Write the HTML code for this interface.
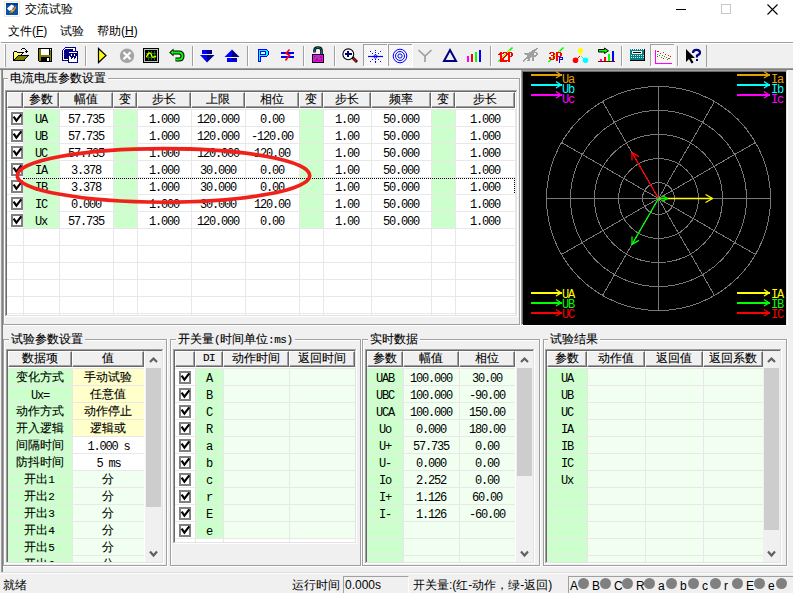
<!DOCTYPE html><html><head><meta charset="utf-8"><title>交流试验</title><style>
*{box-sizing:border-box}
html,body{margin:0;padding:0}
body{width:793px;height:593px;overflow:hidden;position:relative;background:#f0f0f0;font-family:"Liberation Sans",sans-serif;font-size:12px;color:#000}
div{position:absolute}
.ui{font-family:"Liberation Sans",sans-serif;font-size:12px;line-height:14px;white-space:nowrap}
.m{font-family:"Liberation Mono",monospace;font-size:12px;letter-spacing:-1.2px;line-height:16px;text-indent:-1px;white-space:nowrap;text-align:center}
.hc{-webkit-text-stroke:0.1px #000;background:#f0f0f0;border-top:1px solid #fff;border-left:1px solid #fff;border-right:1px solid #696969;border-bottom:1px solid #696969;box-shadow:inset -1px -1px 0 #a0a0a0;text-align:center;font-size:12px;line-height:13px;white-space:nowrap}
.cb{width:12px;height:13px;border:2px solid #808080;background:#fff}
.gl{padding:0 2px;background:#f0f0f0;line-height:14px;-webkit-text-stroke:0.1px #000}
.ms{font-family:"Liberation Mono",monospace;font-size:11px;letter-spacing:-0.5px}
.lg{font-family:"Liberation Mono",monospace;font-size:12px;line-height:11px;letter-spacing:-1.3px}
.t{text-align:center;line-height:17px;-webkit-text-stroke:0.1px #000}
.d{font-family:"Liberation Mono",monospace;font-size:11px}
svg{position:absolute;overflow:visible}
</style></head><body>
<div style="left:0px;top:0px;width:793px;height:42px;background:#fff"></div>
<div style="left:1px;top:42px;width:792px;height:1px;background:#a0a0a0"></div>
<svg style="left:0;top:0" width="24" height="20"><rect x="4.5" y="1.5" width="15" height="15" fill="none" stroke="#ece8e4" stroke-width="1"/><rect x="6" y="3" width="12" height="12" fill="#0a52a8"/><rect x="6" y="3" width="12" height="2" fill="#003c8c"/><path d="M7 8.5 L11.5 4.5 L13.5 5.5 L14 6.5 L12 9.5 L9.5 11 Z" fill="#ffffff"/><path d="M11 8.5 L13.5 6.5 L14 7.5 Z" fill="#a8d0f0"/><path d="M9 13 L12 10 L13 9.5 L15.5 6 L16 7.5 L14.5 10.5 L12.5 12.5 Z" fill="#ff7f10"/><path d="M11 10.5 L13 9.5 L13.5 10.5 L11.5 11.5 Z" fill="#ffd030"/></svg>
<div class="ui" style="left:25px;top:2px;">交流试验</div>
<div style="left:676px;top:9px;width:10px;height:1px;background:#000"></div>
<div style="left:721px;top:4px;width:10px;height:10px;border:1px solid #c8c8c8"></div>
<svg style="left:767px;top:4px" width="11" height="11" viewBox="0 0 11 11"><path d="M0.5 0.5 L10.5 10.5 M10.5 0.5 L0.5 10.5" stroke="#000" stroke-width="1.1"/></svg>
<div class="ui" style="left:8px;top:24px">文件(<u>F</u>)</div>
<div class="ui" style="left:60px;top:24px">试验</div>
<div class="ui" style="left:97px;top:24px">帮助(<u>H</u>)</div>
<div style="left:0px;top:43px;width:793px;height:1px;background:#fff"></div>
<div style="left:0px;top:44px;width:793px;height:24px;background:#f0f0f0"></div>
<div style="left:4px;top:44px;width:1px;height:23px;background:#fff"></div>
<div style="left:5px;top:44px;width:1px;height:23px;background:#a0a0a0"></div>
<div style="left:85px;top:46px;width:1px;height:20px;background:#a0a0a0"></div>
<div style="left:86px;top:46px;width:1px;height:20px;background:#fff"></div>
<div style="left:192px;top:46px;width:1px;height:20px;background:#a0a0a0"></div>
<div style="left:193px;top:46px;width:1px;height:20px;background:#fff"></div>
<div style="left:247px;top:46px;width:1px;height:20px;background:#a0a0a0"></div>
<div style="left:248px;top:46px;width:1px;height:20px;background:#fff"></div>
<div style="left:303px;top:46px;width:1px;height:20px;background:#a0a0a0"></div>
<div style="left:304px;top:46px;width:1px;height:20px;background:#fff"></div>
<div style="left:334px;top:46px;width:1px;height:20px;background:#a0a0a0"></div>
<div style="left:335px;top:46px;width:1px;height:20px;background:#fff"></div>
<div style="left:490px;top:46px;width:1px;height:20px;background:#a0a0a0"></div>
<div style="left:491px;top:46px;width:1px;height:20px;background:#fff"></div>
<div style="left:621px;top:46px;width:1px;height:20px;background:#a0a0a0"></div>
<div style="left:622px;top:46px;width:1px;height:20px;background:#fff"></div>
<div style="left:677px;top:46px;width:1px;height:20px;background:#a0a0a0"></div>
<div style="left:678px;top:46px;width:1px;height:20px;background:#fff"></div>
<div style="left:706px;top:45px;width:1px;height:22px;background:#a0a0a0"></div>
<svg style="left:0;top:0" width="793" height="70"><defs><pattern id="chk" width="2" height="2" patternUnits="userSpaceOnUse"><rect width="2" height="2" fill="#f0f0f0"/><rect width="1" height="1" fill="#fff"/><rect x="1" y="1" width="1" height="1" fill="#fff"/></pattern></defs><rect x="22" y="48" width="3" height="1" fill="#000"/><rect x="21" y="49" width="1" height="1" fill="#000"/><rect x="25" y="49" width="1" height="1" fill="#000"/><rect x="26" y="50" width="1" height="1" fill="#000"/><rect x="14" y="51" width="3" height="1" fill="#000"/><rect x="25" y="51" width="3" height="1" fill="#000"/><rect x="13" y="52" width="1" height="1" fill="#000"/><rect x="14" y="52" width="1" height="1" fill="#ffff00"/><rect x="15" y="52" width="1" height="1" fill="#ffffff"/><rect x="16" y="52" width="1" height="1" fill="#ffff00"/><rect x="17" y="52" width="7" height="1" fill="#000"/><rect x="26" y="52" width="1" height="1" fill="#000"/><rect x="13" y="53" width="1" height="1" fill="#000"/><rect x="14" y="53" width="1" height="1" fill="#ffffff"/><rect x="15" y="53" width="1" height="1" fill="#ffff00"/><rect x="16" y="53" width="1" height="1" fill="#ffffff"/><rect x="17" y="53" width="1" height="1" fill="#ffff00"/><rect x="18" y="53" width="1" height="1" fill="#ffffff"/><rect x="19" y="53" width="1" height="1" fill="#ffff00"/><rect x="20" y="53" width="1" height="1" fill="#ffffff"/><rect x="21" y="53" width="1" height="1" fill="#ffff00"/><rect x="22" y="53" width="1" height="1" fill="#000"/><rect x="13" y="54" width="1" height="1" fill="#000"/><rect x="14" y="54" width="1" height="1" fill="#ffff00"/><rect x="15" y="54" width="1" height="1" fill="#ffffff"/><rect x="16" y="54" width="1" height="1" fill="#ffff00"/><rect x="17" y="54" width="1" height="1" fill="#ffffff"/><rect x="18" y="54" width="1" height="1" fill="#ffff00"/><rect x="19" y="54" width="1" height="1" fill="#ffffff"/><rect x="20" y="54" width="1" height="1" fill="#ffff00"/><rect x="21" y="54" width="1" height="1" fill="#000"/><rect x="13" y="55" width="1" height="1" fill="#000"/><rect x="14" y="55" width="1" height="1" fill="#ffffff"/><rect x="15" y="55" width="1" height="1" fill="#ffff00"/><rect x="16" y="55" width="1" height="1" fill="#ffffff"/><rect x="17" y="55" width="1" height="1" fill="#ffff00"/><rect x="18" y="55" width="11" height="1" fill="#000"/><rect x="13" y="56" width="1" height="1" fill="#000"/><rect x="14" y="56" width="1" height="1" fill="#ffff00"/><rect x="15" y="56" width="1" height="1" fill="#ffffff"/><rect x="16" y="56" width="1" height="1" fill="#ffff00"/><rect x="17" y="56" width="1" height="1" fill="#000"/><rect x="18" y="56" width="9" height="1" fill="#808000"/><rect x="27" y="56" width="1" height="1" fill="#000"/><rect x="13" y="57" width="1" height="1" fill="#000"/><rect x="14" y="57" width="1" height="1" fill="#ffffff"/><rect x="15" y="57" width="1" height="1" fill="#ffff00"/><rect x="16" y="57" width="1" height="1" fill="#000"/><rect x="17" y="57" width="9" height="1" fill="#808000"/><rect x="26" y="57" width="1" height="1" fill="#000"/><rect x="13" y="58" width="1" height="1" fill="#000"/><rect x="14" y="58" width="1" height="1" fill="#ffff00"/><rect x="15" y="58" width="1" height="1" fill="#000"/><rect x="16" y="58" width="9" height="1" fill="#808000"/><rect x="25" y="58" width="1" height="1" fill="#000"/><rect x="13" y="59" width="2" height="1" fill="#000"/><rect x="15" y="59" width="9" height="1" fill="#808000"/><rect x="24" y="59" width="1" height="1" fill="#000"/><rect x="13" y="60" width="12" height="1" fill="#000"/><rect x="38" y="48" width="14" height="1" fill="#000"/><rect x="38" y="49" width="1" height="1" fill="#000"/><rect x="39" y="49" width="2" height="1" fill="#808000"/><rect x="41" y="49" width="8" height="1" fill="#ffffff"/><rect x="49" y="49" width="1" height="1" fill="#000"/><rect x="50" y="49" width="1" height="1" fill="#ffffff"/><rect x="51" y="49" width="1" height="1" fill="#000"/><rect x="38" y="50" width="1" height="1" fill="#000"/><rect x="39" y="50" width="2" height="1" fill="#808000"/><rect x="41" y="50" width="8" height="1" fill="#ffffff"/><rect x="49" y="50" width="1" height="1" fill="#000"/><rect x="50" y="50" width="1" height="1" fill="#808000"/><rect x="51" y="50" width="1" height="1" fill="#000"/><rect x="38" y="51" width="1" height="1" fill="#000"/><rect x="39" y="51" width="2" height="1" fill="#808000"/><rect x="41" y="51" width="8" height="1" fill="#ffffff"/><rect x="49" y="51" width="1" height="1" fill="#000"/><rect x="50" y="51" width="1" height="1" fill="#808000"/><rect x="51" y="51" width="1" height="1" fill="#000"/><rect x="38" y="52" width="1" height="1" fill="#000"/><rect x="39" y="52" width="2" height="1" fill="#808000"/><rect x="41" y="52" width="8" height="1" fill="#ffffff"/><rect x="49" y="52" width="1" height="1" fill="#000"/><rect x="50" y="52" width="1" height="1" fill="#808000"/><rect x="51" y="52" width="1" height="1" fill="#000"/><rect x="38" y="53" width="1" height="1" fill="#000"/><rect x="39" y="53" width="2" height="1" fill="#808000"/><rect x="41" y="53" width="8" height="1" fill="#ffffff"/><rect x="49" y="53" width="1" height="1" fill="#000"/><rect x="50" y="53" width="1" height="1" fill="#808000"/><rect x="51" y="53" width="1" height="1" fill="#000"/><rect x="38" y="54" width="1" height="1" fill="#000"/><rect x="39" y="54" width="2" height="1" fill="#808000"/><rect x="41" y="54" width="8" height="1" fill="#ffffff"/><rect x="49" y="54" width="1" height="1" fill="#000"/><rect x="50" y="54" width="1" height="1" fill="#808000"/><rect x="51" y="54" width="1" height="1" fill="#000"/><rect x="38" y="55" width="1" height="1" fill="#000"/><rect x="39" y="55" width="12" height="1" fill="#808000"/><rect x="51" y="55" width="1" height="1" fill="#000"/><rect x="38" y="56" width="1" height="1" fill="#000"/><rect x="39" y="56" width="12" height="1" fill="#808000"/><rect x="51" y="56" width="1" height="1" fill="#000"/><rect x="38" y="57" width="1" height="1" fill="#000"/><rect x="39" y="57" width="2" height="1" fill="#808000"/><rect x="41" y="57" width="9" height="1" fill="#000"/><rect x="50" y="57" width="1" height="1" fill="#808000"/><rect x="51" y="57" width="1" height="1" fill="#000"/><rect x="38" y="58" width="1" height="1" fill="#000"/><rect x="39" y="58" width="2" height="1" fill="#808000"/><rect x="41" y="58" width="6" height="1" fill="#000"/><rect x="47" y="58" width="2" height="1" fill="#ffffff"/><rect x="49" y="58" width="1" height="1" fill="#000"/><rect x="50" y="58" width="1" height="1" fill="#808000"/><rect x="51" y="58" width="1" height="1" fill="#000"/><rect x="38" y="59" width="1" height="1" fill="#000"/><rect x="39" y="59" width="2" height="1" fill="#808000"/><rect x="41" y="59" width="6" height="1" fill="#000"/><rect x="47" y="59" width="2" height="1" fill="#ffffff"/><rect x="49" y="59" width="1" height="1" fill="#000"/><rect x="50" y="59" width="1" height="1" fill="#808000"/><rect x="51" y="59" width="1" height="1" fill="#000"/><rect x="38" y="60" width="1" height="1" fill="#000"/><rect x="39" y="60" width="2" height="1" fill="#808000"/><rect x="41" y="60" width="6" height="1" fill="#000"/><rect x="47" y="60" width="2" height="1" fill="#ffffff"/><rect x="49" y="60" width="1" height="1" fill="#000"/><rect x="50" y="60" width="1" height="1" fill="#808000"/><rect x="51" y="60" width="1" height="1" fill="#000"/><rect x="39" y="61" width="13" height="1" fill="#000"/><rect x="65" y="47" width="1" height="1" fill="#0000ff"/><rect x="66" y="47" width="1" height="1" fill="#000000"/><rect x="67" y="47" width="1" height="1" fill="#0000ff"/><rect x="68" y="47" width="1" height="1" fill="#000000"/><rect x="69" y="47" width="1" height="1" fill="#0000ff"/><rect x="70" y="47" width="1" height="1" fill="#000000"/><rect x="71" y="47" width="1" height="1" fill="#0000ff"/><rect x="72" y="47" width="1" height="1" fill="#000000"/><rect x="73" y="47" width="1" height="1" fill="#0000ff"/><rect x="74" y="47" width="1" height="1" fill="#000000"/><rect x="75" y="47" width="1" height="1" fill="#0000ff"/><rect x="64" y="48" width="1" height="1" fill="#0000ff"/><rect x="65" y="48" width="10" height="1" fill="#ffffff"/><rect x="75" y="48" width="1" height="1" fill="#000000"/><rect x="63" y="49" width="1" height="1" fill="#0000ff"/><rect x="64" y="49" width="1" height="1" fill="#ffffff"/><rect x="65" y="49" width="1" height="1" fill="#0000ff"/><rect x="66" y="49" width="1" height="1" fill="#000000"/><rect x="67" y="49" width="1" height="1" fill="#0000ff"/><rect x="68" y="49" width="1" height="1" fill="#000000"/><rect x="69" y="49" width="1" height="1" fill="#0000ff"/><rect x="70" y="49" width="1" height="1" fill="#000000"/><rect x="71" y="49" width="1" height="1" fill="#0000ff"/><rect x="72" y="49" width="1" height="1" fill="#000000"/><rect x="73" y="49" width="2" height="1" fill="#ffffff"/><rect x="75" y="49" width="1" height="1" fill="#0000ff"/><rect x="62" y="50" width="1" height="1" fill="#0000ff"/><rect x="63" y="50" width="1" height="1" fill="#ffffff"/><rect x="64" y="50" width="1" height="1" fill="#0000ff"/><rect x="65" y="50" width="1" height="1" fill="#000000"/><rect x="66" y="50" width="1" height="1" fill="#0000ff"/><rect x="67" y="50" width="1" height="1" fill="#000000"/><rect x="68" y="50" width="1" height="1" fill="#0000ff"/><rect x="69" y="50" width="1" height="1" fill="#000000"/><rect x="70" y="50" width="1" height="1" fill="#0000ff"/><rect x="71" y="50" width="1" height="1" fill="#000000"/><rect x="72" y="50" width="1" height="1" fill="#0000ff"/><rect x="73" y="50" width="2" height="1" fill="#ffffff"/><rect x="75" y="50" width="1" height="1" fill="#000000"/><rect x="62" y="51" width="1" height="1" fill="#000000"/><rect x="63" y="51" width="1" height="1" fill="#ffffff"/><rect x="64" y="51" width="1" height="1" fill="#000000"/><rect x="65" y="51" width="1" height="1" fill="#0000ff"/><rect x="66" y="51" width="1" height="1" fill="#000000"/><rect x="67" y="51" width="1" height="1" fill="#0000ff"/><rect x="68" y="51" width="1" height="1" fill="#000000"/><rect x="69" y="51" width="1" height="1" fill="#0000ff"/><rect x="70" y="51" width="1" height="1" fill="#000000"/><rect x="71" y="51" width="1" height="1" fill="#0000ff"/><rect x="72" y="51" width="1" height="1" fill="#000000"/><rect x="73" y="51" width="1" height="1" fill="#0000ff"/><rect x="74" y="51" width="1" height="1" fill="#000000"/><rect x="75" y="51" width="1" height="1" fill="#0000ff"/><rect x="76" y="51" width="1" height="1" fill="#000000"/><rect x="77" y="51" width="1" height="1" fill="#0000ff"/><rect x="62" y="52" width="1" height="1" fill="#0000ff"/><rect x="63" y="52" width="1" height="1" fill="#ffffff"/><rect x="64" y="52" width="1" height="1" fill="#0000ff"/><rect x="65" y="52" width="1" height="1" fill="#000000"/><rect x="66" y="52" width="1" height="1" fill="#0000ff"/><rect x="67" y="52" width="1" height="1" fill="#000000"/><rect x="68" y="52" width="1" height="1" fill="#0000ff"/><rect x="69" y="52" width="8" height="1" fill="#ffffff"/><rect x="77" y="52" width="1" height="1" fill="#000000"/><rect x="62" y="53" width="1" height="1" fill="#000000"/><rect x="63" y="53" width="1" height="1" fill="#ffffff"/><rect x="64" y="53" width="1" height="1" fill="#000000"/><rect x="65" y="53" width="1" height="1" fill="#0000ff"/><rect x="66" y="53" width="1" height="1" fill="#000000"/><rect x="67" y="53" width="1" height="1" fill="#0000ff"/><rect x="68" y="53" width="1" height="1" fill="#000000"/><rect x="69" y="53" width="1" height="1" fill="#0000ff"/><rect x="70" y="53" width="1" height="1" fill="#000000"/><rect x="71" y="53" width="1" height="1" fill="#0000ff"/><rect x="72" y="53" width="1" height="1" fill="#000000"/><rect x="73" y="53" width="1" height="1" fill="#0000ff"/><rect x="74" y="53" width="1" height="1" fill="#000000"/><rect x="75" y="53" width="1" height="1" fill="#0000ff"/><rect x="76" y="53" width="1" height="1" fill="#000000"/><rect x="77" y="53" width="1" height="1" fill="#0000ff"/><rect x="62" y="54" width="1" height="1" fill="#0000ff"/><rect x="63" y="54" width="1" height="1" fill="#ffffff"/><rect x="64" y="54" width="1" height="1" fill="#0000ff"/><rect x="65" y="54" width="1" height="1" fill="#000000"/><rect x="66" y="54" width="1" height="1" fill="#0000ff"/><rect x="67" y="54" width="1" height="1" fill="#000000"/><rect x="68" y="54" width="1" height="1" fill="#0000ff"/><rect x="69" y="54" width="1" height="1" fill="#000000"/><rect x="70" y="54" width="1" height="1" fill="#0000ff"/><rect x="71" y="54" width="1" height="1" fill="#ffffff"/><rect x="72" y="54" width="1" height="1" fill="#0000ff"/><rect x="73" y="54" width="1" height="1" fill="#000000"/><rect x="74" y="54" width="1" height="1" fill="#ffffff"/><rect x="75" y="54" width="1" height="1" fill="#000000"/><rect x="76" y="54" width="1" height="1" fill="#0000ff"/><rect x="77" y="54" width="1" height="1" fill="#000000"/><rect x="62" y="55" width="1" height="1" fill="#000000"/><rect x="63" y="55" width="1" height="1" fill="#ffffff"/><rect x="64" y="55" width="1" height="1" fill="#000000"/><rect x="65" y="55" width="1" height="1" fill="#0000ff"/><rect x="66" y="55" width="1" height="1" fill="#000000"/><rect x="67" y="55" width="1" height="1" fill="#0000ff"/><rect x="68" y="55" width="1" height="1" fill="#000000"/><rect x="69" y="55" width="1" height="1" fill="#0000ff"/><rect x="70" y="55" width="1" height="1" fill="#000000"/><rect x="71" y="55" width="1" height="1" fill="#ffffff"/><rect x="72" y="55" width="1" height="1" fill="#000000"/><rect x="73" y="55" width="1" height="1" fill="#0000ff"/><rect x="74" y="55" width="1" height="1" fill="#ffffff"/><rect x="75" y="55" width="1" height="1" fill="#0000ff"/><rect x="76" y="55" width="1" height="1" fill="#000000"/><rect x="77" y="55" width="1" height="1" fill="#0000ff"/><rect x="62" y="56" width="1" height="1" fill="#0000ff"/><rect x="63" y="56" width="1" height="1" fill="#ffffff"/><rect x="64" y="56" width="1" height="1" fill="#0000ff"/><rect x="65" y="56" width="1" height="1" fill="#000000"/><rect x="66" y="56" width="1" height="1" fill="#0000ff"/><rect x="67" y="56" width="1" height="1" fill="#000000"/><rect x="68" y="56" width="1" height="1" fill="#0000ff"/><rect x="69" y="56" width="1" height="1" fill="#ffffff"/><rect x="70" y="56" width="1" height="1" fill="#0000ff"/><rect x="71" y="56" width="1" height="1" fill="#000000"/><rect x="72" y="56" width="1" height="1" fill="#0000ff"/><rect x="73" y="56" width="1" height="1" fill="#000000"/><rect x="74" y="56" width="1" height="1" fill="#0000ff"/><rect x="75" y="56" width="1" height="1" fill="#000000"/><rect x="76" y="56" width="1" height="1" fill="#ffffff"/><rect x="77" y="56" width="1" height="1" fill="#000000"/><rect x="62" y="57" width="1" height="1" fill="#000000"/><rect x="63" y="57" width="1" height="1" fill="#ffffff"/><rect x="64" y="57" width="1" height="1" fill="#000000"/><rect x="65" y="57" width="1" height="1" fill="#0000ff"/><rect x="66" y="57" width="1" height="1" fill="#000000"/><rect x="67" y="57" width="1" height="1" fill="#0000ff"/><rect x="68" y="57" width="1" height="1" fill="#000000"/><rect x="69" y="57" width="2" height="1" fill="#ffffff"/><rect x="71" y="57" width="1" height="1" fill="#0000ff"/><rect x="72" y="57" width="1" height="1" fill="#000000"/><rect x="73" y="57" width="1" height="1" fill="#ffffff"/><rect x="74" y="57" width="1" height="1" fill="#000000"/><rect x="75" y="57" width="1" height="1" fill="#0000ff"/><rect x="76" y="57" width="1" height="1" fill="#ffffff"/><rect x="77" y="57" width="1" height="1" fill="#0000ff"/><rect x="62" y="58" width="1" height="1" fill="#0000ff"/><rect x="63" y="58" width="1" height="1" fill="#ffffff"/><rect x="64" y="58" width="1" height="1" fill="#0000ff"/><rect x="65" y="58" width="1" height="1" fill="#000000"/><rect x="66" y="58" width="1" height="1" fill="#0000ff"/><rect x="67" y="58" width="1" height="1" fill="#000000"/><rect x="68" y="58" width="1" height="1" fill="#0000ff"/><rect x="69" y="58" width="2" height="1" fill="#ffffff"/><rect x="71" y="58" width="1" height="1" fill="#000000"/><rect x="72" y="58" width="2" height="1" fill="#ffffff"/><rect x="74" y="58" width="1" height="1" fill="#0000ff"/><rect x="75" y="58" width="2" height="1" fill="#ffffff"/><rect x="77" y="58" width="1" height="1" fill="#000000"/><rect x="62" y="59" width="1" height="1" fill="#000000"/><rect x="63" y="59" width="5" height="1" fill="#ffffff"/><rect x="68" y="59" width="1" height="1" fill="#000000"/><rect x="69" y="59" width="8" height="1" fill="#ffffff"/><rect x="77" y="59" width="1" height="1" fill="#0000ff"/><rect x="62" y="60" width="1" height="1" fill="#0000ff"/><rect x="63" y="60" width="1" height="1" fill="#000000"/><rect x="64" y="60" width="1" height="1" fill="#0000ff"/><rect x="65" y="60" width="1" height="1" fill="#000000"/><rect x="66" y="60" width="1" height="1" fill="#0000ff"/><rect x="67" y="60" width="1" height="1" fill="#000000"/><rect x="68" y="60" width="1" height="1" fill="#0000ff"/><rect x="69" y="60" width="8" height="1" fill="#ffffff"/><rect x="77" y="60" width="1" height="1" fill="#000000"/><rect x="68" y="61" width="1" height="1" fill="#000000"/><rect x="69" y="61" width="8" height="1" fill="#ffffff"/><rect x="77" y="61" width="1" height="1" fill="#0000ff"/><rect x="68" y="62" width="1" height="1" fill="#0000ff"/><rect x="69" y="62" width="1" height="1" fill="#000000"/><rect x="70" y="62" width="1" height="1" fill="#0000ff"/><rect x="71" y="62" width="1" height="1" fill="#000000"/><rect x="72" y="62" width="1" height="1" fill="#0000ff"/><rect x="73" y="62" width="1" height="1" fill="#000000"/><rect x="74" y="62" width="1" height="1" fill="#0000ff"/><rect x="75" y="62" width="1" height="1" fill="#000000"/><rect x="76" y="62" width="1" height="1" fill="#0000ff"/><rect x="77" y="62" width="1" height="1" fill="#000000"/><path d="M98.5 48.5 L106 55.5 L98.5 62.5 Z" fill="#ffff00" stroke="#000" stroke-width="1.2"/><circle cx="127" cy="55.8" r="7.2" fill="#a4a4a4"/><path d="M123.5 52.3 L130.5 59.3 M130.5 52.3 L123.5 59.3" stroke="#fff" stroke-width="2.2"/><rect x="143" y="48" width="16" height="15" fill="#000"/><rect x="144" y="49" width="14" height="13" fill="#c0c0c0"/><rect x="145" y="50" width="12" height="11" fill="#000"/><rect x="146" y="51" width="10" height="9" fill="#000000"/><path d="M146 53.5 H156 M146 57.5 H156 M148.5 51 V60 M151.5 51 V60 M154.5 51 V60" stroke="#008000" stroke-width="1" fill="none" shape-rendering="crispEdges"/><path d="M146.5 57 Q148.5 52 150 53 Q151.5 54 152 56.5 Q153 58 156 56" stroke="#ffff00" stroke-width="1.3" fill="none"/><path d="M172 52.5 H179 Q182.5 52.5 182.5 56 Q182.5 59.5 179 59.5 H175.5" stroke="#000" stroke-width="4" fill="none"/><path d="M169.2 52.5 L173.5 48.6 L173.5 56.4 Z" fill="#000"/><path d="M172 52.5 H179 Q182.5 52.5 182.5 56 Q182.5 59.5 179 59.5 H175.5" stroke="#00ff00" stroke-width="2" fill="none"/><path d="M170.6 52.5 L173 50.3 L173 54.7 Z" fill="#00ff00"/><rect x="202" y="50" width="5" height="4" fill="#0000ff"/><rect x="207" y="50" width="5" height="4" fill="#000080"/><path d="M200 55 H207 V62.5 Z" fill="#0000ff"/><path d="M207 55 H214.5 L207 62.5 Z" fill="#000080"/><path d="M224.5 57 L232 49.5 V57 Z" fill="#0000ff"/><path d="M232 49.5 L239.5 57 H232 Z" fill="#000080"/><rect x="227" y="58" width="10" height="4" fill="#0000ff"/><rect x="232" y="58" width="5" height="2" fill="#000080"/><rect x="258" y="49" width="9" height="1" fill="#0000ff"/><rect x="258" y="50" width="1" height="1" fill="#0000ff"/><rect x="259" y="50" width="8" height="1" fill="#00ffff"/><rect x="267" y="50" width="1" height="1" fill="#0000ff"/><rect x="258" y="51" width="1" height="1" fill="#0000ff"/><rect x="259" y="51" width="1" height="1" fill="#00ffff"/><rect x="260" y="51" width="6" height="1" fill="#0000ff"/><rect x="266" y="51" width="2" height="1" fill="#00ffff"/><rect x="268" y="51" width="1" height="1" fill="#0000ff"/><rect x="258" y="52" width="1" height="1" fill="#0000ff"/><rect x="259" y="52" width="1" height="1" fill="#00ffff"/><rect x="260" y="52" width="1" height="1" fill="#0000ff"/><rect x="265" y="52" width="1" height="1" fill="#0000ff"/><rect x="266" y="52" width="2" height="1" fill="#00ffff"/><rect x="268" y="52" width="1" height="1" fill="#0000ff"/><rect x="258" y="53" width="1" height="1" fill="#0000ff"/><rect x="259" y="53" width="1" height="1" fill="#00ffff"/><rect x="260" y="53" width="1" height="1" fill="#0000ff"/><rect x="265" y="53" width="1" height="1" fill="#0000ff"/><rect x="266" y="53" width="2" height="1" fill="#00ffff"/><rect x="268" y="53" width="1" height="1" fill="#0000ff"/><rect x="258" y="54" width="1" height="1" fill="#0000ff"/><rect x="259" y="54" width="1" height="1" fill="#00ffff"/><rect x="260" y="54" width="6" height="1" fill="#0000ff"/><rect x="266" y="54" width="2" height="1" fill="#00ffff"/><rect x="268" y="54" width="1" height="1" fill="#0000ff"/><rect x="258" y="55" width="1" height="1" fill="#0000ff"/><rect x="259" y="55" width="8" height="1" fill="#00ffff"/><rect x="267" y="55" width="1" height="1" fill="#0000ff"/><rect x="258" y="56" width="1" height="1" fill="#0000ff"/><rect x="259" y="56" width="1" height="1" fill="#00ffff"/><rect x="260" y="56" width="7" height="1" fill="#0000ff"/><rect x="258" y="57" width="1" height="1" fill="#0000ff"/><rect x="259" y="57" width="1" height="1" fill="#00ffff"/><rect x="260" y="57" width="1" height="1" fill="#0000ff"/><rect x="258" y="58" width="1" height="1" fill="#0000ff"/><rect x="259" y="58" width="1" height="1" fill="#00ffff"/><rect x="260" y="58" width="1" height="1" fill="#0000ff"/><rect x="258" y="59" width="1" height="1" fill="#0000ff"/><rect x="259" y="59" width="1" height="1" fill="#00ffff"/><rect x="260" y="59" width="1" height="1" fill="#0000ff"/><rect x="258" y="60" width="1" height="1" fill="#0000ff"/><rect x="259" y="60" width="1" height="1" fill="#00ffff"/><rect x="260" y="60" width="1" height="1" fill="#0000ff"/><rect x="258" y="61" width="3" height="1" fill="#0000ff"/><rect x="281" y="52" width="13" height="2" fill="#0000ff"/><rect x="281" y="56" width="13" height="2" fill="#0000ff"/><path d="M289.5 49.5 L286 53.5 L289.5 55 L285.5 60.5" stroke="#ff0000" stroke-width="1.6" fill="none"/><path d="M314.5 52.5 V50.5 Q314.5 47.5 318 47.5 Q321.5 47.5 321.5 50.5 V54" stroke="#000" stroke-width="2.6" fill="none"/><path d="M314.5 52 V50.5 Q314.5 47.5 318 47.5 Q321.5 47.5 321.5 50.5 V54" stroke="#008080" stroke-width="1" fill="none"/><rect x="312" y="54" width="12" height="9" fill="#000"/><rect x="313" y="55" width="10" height="7" fill="#ff00ff"/><rect x="314" y="56" width="8" height="5" fill="#c000c0"/><path d="M314.5 60 L316 57 H320 M318 59 H321" stroke="#808080" stroke-width="1" fill="none"/><path d="M352.5 57.5 L357 62" stroke="#000" stroke-width="2.8"/><path d="M353 58 L356.5 61.5" stroke="#ff0000" stroke-width="1.4"/><circle cx="348.3" cy="54.3" r="5.4" fill="#fff" stroke="#000" stroke-width="1.1"/><rect x="345" y="53" width="7" height="2" fill="#000080"/><rect x="347" y="51" width="2" height="6" fill="#000080"/><rect x="363" y="44" width="25" height="23" fill="url(#chk)"/><rect x="363" y="44" width="25" height="1" fill="#a0a0a0"/><rect x="363" y="44" width="1" height="23" fill="#a0a0a0"/><rect x="363" y="66" width="25" height="1" fill="#fff"/><rect x="387" y="44" width="1" height="23" fill="#fff"/><rect x="388" y="44" width="25" height="23" fill="url(#chk)"/><rect x="388" y="44" width="25" height="1" fill="#a0a0a0"/><rect x="388" y="44" width="1" height="23" fill="#a0a0a0"/><rect x="388" y="66" width="25" height="1" fill="#fff"/><rect x="412" y="44" width="1" height="23" fill="#fff"/><rect x="650" y="44" width="25" height="23" fill="url(#chk)"/><rect x="650" y="44" width="25" height="1" fill="#a0a0a0"/><rect x="650" y="44" width="1" height="23" fill="#a0a0a0"/><rect x="650" y="66" width="25" height="1" fill="#fff"/><rect x="674" y="44" width="1" height="23" fill="#fff"/><path d="M368 56.5 H383" stroke="#0000ff" stroke-width="1.2"/><circle cx="375.5" cy="56.5" r="1.6" fill="none" stroke="#0000ff" stroke-width="1"/><rect x="375" y="50" width="1" height="1" fill="#0000ff"/><rect x="375" y="52" width="1" height="1" fill="#0000ff"/><rect x="375" y="54" width="1" height="1" fill="#0000ff"/><rect x="375" y="59" width="1" height="1" fill="#0000ff"/><rect x="375" y="61" width="1" height="1" fill="#0000ff"/><rect x="375" y="62" width="1" height="1" fill="#0000ff"/><rect x="370" y="51" width="1" height="1" fill="#0000ff"/><rect x="372" y="53" width="1" height="1" fill="#0000ff"/><rect x="378" y="53" width="1" height="1" fill="#0000ff"/><rect x="380" y="51" width="1" height="1" fill="#0000ff"/><rect x="372" y="59" width="1" height="1" fill="#0000ff"/><rect x="370" y="61" width="1" height="1" fill="#0000ff"/><rect x="378" y="59" width="1" height="1" fill="#0000ff"/><rect x="380" y="61" width="1" height="1" fill="#0000ff"/><circle cx="400" cy="56" r="6.8" fill="none" stroke="#0000ff" stroke-width="1"/><circle cx="400" cy="56" r="4.5" fill="none" stroke="#0000ff" stroke-width="1"/><circle cx="400" cy="56" r="2.1" fill="none" stroke="#0000ff" stroke-width="1"/><path d="M418.5 50 L425 56 L431.5 50 M425 56 V62" stroke="#a0a0a0" stroke-width="1.7" fill="none"/><path d="M450 50 L456 61 H444 Z" stroke="#000080" stroke-width="2" fill="none" stroke-linejoin="miter"/><rect x="467" y="56" width="2" height="6" fill="#ff00ff"/><rect x="471" y="54" width="2" height="8" fill="#ff0000"/><rect x="475" y="52" width="2" height="10" fill="#00ff00"/><rect x="479" y="50" width="2" height="12" fill="#0000ff"/><path d="M498.5 61.5 L512.5 47.5" stroke="#00ff00" stroke-width="1.6"/><path d="M502 58 L510 50" stroke="#ffff00" stroke-width="1"/><rect x="500" y="52" width="2" height="1" fill="#ff0000"/><rect x="503" y="52" width="4" height="1" fill="#ff0000"/><rect x="508" y="52" width="4" height="1" fill="#ff0000"/><rect x="499" y="53" width="5" height="1" fill="#ff0000"/><rect x="506" y="53" width="4" height="1" fill="#ff0000"/><rect x="511" y="53" width="2" height="1" fill="#ff0000"/><rect x="498" y="54" width="4" height="1" fill="#ff0000"/><rect x="506" y="54" width="4" height="1" fill="#ff0000"/><rect x="511" y="54" width="2" height="1" fill="#ff0000"/><rect x="500" y="55" width="2" height="1" fill="#ff0000"/><rect x="505" y="55" width="2" height="1" fill="#ff0000"/><rect x="508" y="55" width="2" height="1" fill="#ff0000"/><rect x="511" y="55" width="2" height="1" fill="#ff0000"/><rect x="500" y="56" width="2" height="1" fill="#ff0000"/><rect x="504" y="56" width="2" height="1" fill="#ff0000"/><rect x="508" y="56" width="4" height="1" fill="#ff0000"/><rect x="500" y="57" width="2" height="1" fill="#ff0000"/><rect x="503" y="57" width="2" height="1" fill="#ff0000"/><rect x="508" y="57" width="2" height="1" fill="#ff0000"/><rect x="500" y="58" width="4" height="1" fill="#ff0000"/><rect x="508" y="58" width="2" height="1" fill="#ff0000"/><rect x="500" y="59" width="4" height="1" fill="#ff0000"/><rect x="508" y="59" width="2" height="1" fill="#ff0000"/><rect x="500" y="60" width="10" height="1" fill="#ff0000"/><rect x="500" y="61" width="7" height="1" fill="#ff0000"/><rect x="508" y="61" width="2" height="1" fill="#ff0000"/><rect x="536" y="48" width="2" height="1" fill="#a0a0a0"/><rect x="534" y="49" width="3" height="1" fill="#a0a0a0"/><rect x="532" y="50" width="4" height="1" fill="#a0a0a0"/><rect x="531" y="51" width="4" height="1" fill="#a0a0a0"/><rect x="529" y="52" width="8" height="1" fill="#a0a0a0"/><rect x="524" y="53" width="10" height="1" fill="#a0a0a0"/><rect x="536" y="53" width="2" height="1" fill="#a0a0a0"/><rect x="525" y="54" width="9" height="1" fill="#a0a0a0"/><rect x="536" y="54" width="2" height="1" fill="#a0a0a0"/><rect x="527" y="55" width="10" height="1" fill="#a0a0a0"/><rect x="527" y="56" width="9" height="1" fill="#a0a0a0"/><rect x="526" y="57" width="5" height="1" fill="#a0a0a0"/><rect x="532" y="57" width="2" height="1" fill="#a0a0a0"/><rect x="525" y="58" width="5" height="1" fill="#a0a0a0"/><rect x="532" y="58" width="2" height="1" fill="#a0a0a0"/><rect x="524" y="59" width="2" height="1" fill="#a0a0a0"/><rect x="528" y="59" width="2" height="1" fill="#a0a0a0"/><rect x="532" y="59" width="2" height="1" fill="#a0a0a0"/><rect x="523" y="60" width="2" height="1" fill="#a0a0a0"/><rect x="527" y="60" width="3" height="1" fill="#a0a0a0"/><rect x="532" y="60" width="2" height="1" fill="#a0a0a0"/><rect x="523" y="61" width="1" height="1" fill="#a0a0a0"/><path d="M548.5 62 L563.5 47.5" stroke="#00ff00" stroke-width="1.6"/><path d="M552 58.5 L560 51" stroke="#ffff00" stroke-width="1"/><rect x="550" y="52" width="4" height="1" fill="#ff0000"/><rect x="556" y="52" width="5" height="1" fill="#ff0000"/><rect x="549" y="53" width="2" height="1" fill="#ff0000"/><rect x="553" y="53" width="2" height="1" fill="#ff0000"/><rect x="556" y="53" width="2" height="1" fill="#ff0000"/><rect x="560" y="53" width="2" height="1" fill="#ff0000"/><rect x="553" y="54" width="2" height="1" fill="#ff0000"/><rect x="556" y="54" width="2" height="1" fill="#ff0000"/><rect x="560" y="54" width="2" height="1" fill="#ff0000"/><rect x="551" y="55" width="3" height="1" fill="#ff0000"/><rect x="556" y="55" width="2" height="1" fill="#ff0000"/><rect x="560" y="55" width="2" height="1" fill="#ff0000"/><rect x="553" y="56" width="2" height="1" fill="#ff0000"/><rect x="556" y="56" width="5" height="1" fill="#ff0000"/><rect x="549" y="57" width="2" height="1" fill="#ff0000"/><rect x="553" y="57" width="2" height="1" fill="#ff0000"/><rect x="556" y="57" width="2" height="1" fill="#ff0000"/><rect x="549" y="58" width="2" height="1" fill="#ff0000"/><rect x="553" y="58" width="2" height="1" fill="#ff0000"/><rect x="556" y="58" width="2" height="1" fill="#ff0000"/><rect x="550" y="59" width="4" height="1" fill="#ff0000"/><rect x="556" y="59" width="2" height="1" fill="#ff0000"/><rect x="556" y="60" width="2" height="1" fill="#ff0000"/><rect x="559" y="57" width="4" height="1" fill="#0000ff"/><rect x="559" y="58" width="1" height="1" fill="#0000ff"/><rect x="562" y="58" width="1" height="1" fill="#0000ff"/><rect x="559" y="59" width="4" height="1" fill="#0000ff"/><rect x="559" y="60" width="1" height="1" fill="#0000ff"/><rect x="559" y="61" width="1" height="1" fill="#0000ff"/><rect x="559" y="62" width="1" height="1" fill="#0000ff"/><rect x="580" y="52" width="1" height="4" fill="#ffff00"/><rect x="579" y="56" width="1" height="1" fill="#ff0000"/><rect x="578" y="57" width="1" height="1" fill="#ff0000"/><rect x="577" y="58" width="1" height="1" fill="#ff0000"/><rect x="581" y="56" width="1" height="1" fill="#00ffff"/><rect x="582" y="57" width="1" height="1" fill="#00ffff"/><rect x="583" y="58" width="1" height="1" fill="#00ffff"/><circle cx="580.5" cy="50.5" r="2.6" fill="#ffff00"/><circle cx="575.5" cy="60.3" r="2.8" fill="#ff0000"/><circle cx="585.5" cy="60.3" r="2.8" fill="#00ffff"/><rect x="598" y="61" width="17" height="1" fill="#800000"/><rect x="600" y="59" width="2" height="2" fill="#ff00ff"/><rect x="604" y="57" width="2" height="4" fill="#ff0000"/><rect x="608" y="54" width="2" height="7" fill="#00ff00"/><rect x="612" y="51" width="2" height="10" fill="#0000ff"/><path d="M598.5 49.5 H604.5 V48 L608.5 50.8 L604.5 53.5 V52 H598.5 Z" fill="#00ff00" stroke="#000" stroke-width="1"/><rect x="630" y="49" width="15" height="12" fill="#000"/><rect x="630" y="49" width="14" height="11" fill="#008080"/><rect x="632" y="51" width="10" height="3" fill="#fff"/><rect x="633" y="52" width="8" height="1" fill="#000"/><rect x="631" y="49" width="1" height="1" fill="#fff"/><rect x="633" y="49" width="1" height="1" fill="#fff"/><rect x="635" y="49" width="1" height="1" fill="#fff"/><rect x="637" y="49" width="1" height="1" fill="#fff"/><rect x="639" y="49" width="1" height="1" fill="#fff"/><rect x="641" y="49" width="1" height="1" fill="#fff"/><rect x="643" y="49" width="1" height="1" fill="#fff"/><rect x="631" y="55" width="1" height="1" fill="#e0e0e0"/><rect x="633" y="55" width="1" height="1" fill="#e0e0e0"/><rect x="635" y="55" width="1" height="1" fill="#e0e0e0"/><rect x="637" y="55" width="1" height="1" fill="#e0e0e0"/><rect x="639" y="55" width="1" height="1" fill="#e0e0e0"/><rect x="641" y="55" width="1" height="1" fill="#e0e0e0"/><rect x="643" y="55" width="1" height="1" fill="#e0e0e0"/><rect x="631" y="57" width="1" height="1" fill="#e0e0e0"/><rect x="633" y="57" width="1" height="1" fill="#e0e0e0"/><rect x="635" y="57" width="1" height="1" fill="#e0e0e0"/><rect x="637" y="57" width="1" height="1" fill="#e0e0e0"/><rect x="639" y="57" width="1" height="1" fill="#e0e0e0"/><rect x="641" y="57" width="1" height="1" fill="#e0e0e0"/><rect x="643" y="57" width="1" height="1" fill="#e0e0e0"/><rect x="655" y="50" width="1" height="14" fill="#ff00ff"/><rect x="655" y="63" width="17" height="1" fill="#ff00ff"/><rect x="657" y="51" width="1" height="1" fill="#ff0000"/><rect x="658" y="51" width="1" height="1" fill="#ff0000"/><rect x="660" y="53" width="1" height="1" fill="#ff0000"/><rect x="663" y="52" width="1" height="1" fill="#ff0000"/><rect x="665" y="54" width="1" height="1" fill="#ff0000"/><rect x="668" y="55" width="1" height="1" fill="#ff0000"/><rect x="670" y="56" width="1" height="1" fill="#ff0000"/><rect x="657" y="54" width="1" height="1" fill="#00c000"/><rect x="659" y="55" width="1" height="1" fill="#00c000"/><rect x="662" y="55" width="1" height="1" fill="#00c000"/><rect x="664" y="56" width="1" height="1" fill="#00c000"/><rect x="666" y="57" width="1" height="1" fill="#00c000"/><rect x="668" y="58" width="1" height="1" fill="#00c000"/><rect x="657" y="56" width="1" height="1" fill="#ff0000"/><rect x="661" y="57" width="1" height="1" fill="#00c000"/><rect x="663" y="58" width="1" height="1" fill="#ff0000"/><rect x="667" y="59" width="1" height="1" fill="#00c000"/><rect x="669" y="58" width="1" height="1" fill="#ff0000"/><path d="M686 49 V62 L689 59 L691.5 63.5 L693.5 62.5 L691 58 H695 Z" fill="#000"/><path d="M693 53 Q693 49.8 696.5 49.8 Q700 49.8 700 52.5 Q700 54.5 697 55.5 V57.5" stroke="#000080" stroke-width="2.2" fill="none"/><rect x="696" y="59" width="2" height="2" fill="#000080"/></svg>
<div style="left:0px;top:68px;width:793px;height:1px;background:#a0a0a0"></div>
<div style="left:0px;top:69px;width:793px;height:1px;background:#808080"></div>
<div style="left:1px;top:70px;width:1px;height:502px;background:#a0a0a0"></div>
<div style="left:2px;top:70px;width:1px;height:502px;background:#808080"></div>
<div style="left:3px;top:78px;width:1px;height:246px;background:#a0a0a0"></div>
<div style="left:4px;top:79px;width:1px;height:245px;background:#fff"></div>
<div style="left:3px;top:78px;width:516px;height:1px;background:#a0a0a0"></div>
<div style="left:4px;top:79px;width:515px;height:1px;background:#fff"></div>
<div style="left:519px;top:78px;width:1px;height:247px;background:#a0a0a0"></div>
<div style="left:520px;top:78px;width:1px;height:248px;background:#fff"></div>
<div style="left:3px;top:324px;width:517px;height:1px;background:#a0a0a0"></div>
<div style="left:3px;top:325px;width:518px;height:1px;background:#fff"></div>
<div class="ui gl" style="left:8px;top:71px">电流电压参数设置</div>
<div style="left:3px;top:339px;width:1px;height:226px;background:#a0a0a0"></div>
<div style="left:4px;top:340px;width:1px;height:225px;background:#fff"></div>
<div style="left:3px;top:339px;width:163px;height:1px;background:#a0a0a0"></div>
<div style="left:4px;top:340px;width:162px;height:1px;background:#fff"></div>
<div style="left:166px;top:339px;width:1px;height:227px;background:#a0a0a0"></div>
<div style="left:167px;top:339px;width:1px;height:228px;background:#fff"></div>
<div style="left:3px;top:565px;width:164px;height:1px;background:#a0a0a0"></div>
<div style="left:3px;top:566px;width:165px;height:1px;background:#fff"></div>
<div class="ui gl" style="left:9px;top:332px">试验参数设置</div>
<div style="left:170px;top:339px;width:1px;height:226px;background:#a0a0a0"></div>
<div style="left:171px;top:340px;width:1px;height:225px;background:#fff"></div>
<div style="left:170px;top:339px;width:190px;height:1px;background:#a0a0a0"></div>
<div style="left:171px;top:340px;width:189px;height:1px;background:#fff"></div>
<div style="left:360px;top:339px;width:1px;height:227px;background:#a0a0a0"></div>
<div style="left:361px;top:339px;width:1px;height:228px;background:#fff"></div>
<div style="left:170px;top:565px;width:191px;height:1px;background:#a0a0a0"></div>
<div style="left:170px;top:566px;width:192px;height:1px;background:#fff"></div>
<div class="ui gl" style="left:176px;top:332px">开关量<span class="ms">(</span>时间单位<span class="ms">:ms)</span></div>
<div style="left:362px;top:339px;width:1px;height:226px;background:#a0a0a0"></div>
<div style="left:363px;top:340px;width:1px;height:225px;background:#fff"></div>
<div style="left:362px;top:339px;width:177px;height:1px;background:#a0a0a0"></div>
<div style="left:363px;top:340px;width:176px;height:1px;background:#fff"></div>
<div style="left:539px;top:339px;width:1px;height:227px;background:#a0a0a0"></div>
<div style="left:540px;top:339px;width:1px;height:228px;background:#fff"></div>
<div style="left:362px;top:565px;width:178px;height:1px;background:#a0a0a0"></div>
<div style="left:362px;top:566px;width:179px;height:1px;background:#fff"></div>
<div class="ui gl" style="left:368px;top:332px">实时数据</div>
<div style="left:543px;top:339px;width:1px;height:226px;background:#a0a0a0"></div>
<div style="left:544px;top:340px;width:1px;height:225px;background:#fff"></div>
<div style="left:543px;top:339px;width:243px;height:1px;background:#a0a0a0"></div>
<div style="left:544px;top:340px;width:242px;height:1px;background:#fff"></div>
<div style="left:786px;top:339px;width:1px;height:227px;background:#a0a0a0"></div>
<div style="left:787px;top:339px;width:1px;height:228px;background:#fff"></div>
<div style="left:543px;top:565px;width:244px;height:1px;background:#a0a0a0"></div>
<div style="left:543px;top:566px;width:245px;height:1px;background:#fff"></div>
<div class="ui gl" style="left:548px;top:332px">试验结果</div>
<div style="left:5px;top:90px;width:513px;height:227px;background:#fff"></div>
<div style="left:5px;top:90px;width:513px;height:1px;background:#a0a0a0"></div>
<div style="left:5px;top:90px;width:1px;height:227px;background:#a0a0a0"></div>
<div style="left:6px;top:91px;width:511px;height:1px;background:#696969"></div>
<div style="left:6px;top:91px;width:1px;height:225px;background:#696969"></div>
<div style="left:6px;top:315px;width:511px;height:1px;background:#e3e3e3"></div>
<div style="left:516px;top:91px;width:1px;height:225px;background:#e3e3e3"></div>
<div style="left:5px;top:316px;width:513px;height:1px;background:#fff"></div>
<div style="left:517px;top:90px;width:1px;height:227px;background:#fff"></div>
<div style="left:7px;top:108px;width:509px;height:207px;background:#fff"></div>
<div style="left:24px;top:110px;width:35px;height:16px;background:#ccffcc"></div>
<div style="left:114px;top:110px;width:23px;height:16px;background:#ccffcc"></div>
<div style="left:300px;top:110px;width:23px;height:16px;background:#ccffcc"></div>
<div style="left:432px;top:110px;width:23px;height:16px;background:#ccffcc"></div>
<div style="left:24px;top:127px;width:35px;height:16px;background:#ccffcc"></div>
<div style="left:114px;top:127px;width:23px;height:16px;background:#ccffcc"></div>
<div style="left:300px;top:127px;width:23px;height:16px;background:#ccffcc"></div>
<div style="left:432px;top:127px;width:23px;height:16px;background:#ccffcc"></div>
<div style="left:24px;top:144px;width:35px;height:16px;background:#ccffcc"></div>
<div style="left:114px;top:144px;width:23px;height:16px;background:#ccffcc"></div>
<div style="left:300px;top:144px;width:23px;height:16px;background:#ccffcc"></div>
<div style="left:432px;top:144px;width:23px;height:16px;background:#ccffcc"></div>
<div style="left:24px;top:161px;width:35px;height:16px;background:#ccffcc"></div>
<div style="left:114px;top:161px;width:23px;height:16px;background:#ccffcc"></div>
<div style="left:300px;top:161px;width:23px;height:16px;background:#ccffcc"></div>
<div style="left:432px;top:161px;width:23px;height:16px;background:#ccffcc"></div>
<div style="left:24px;top:178px;width:35px;height:16px;background:#ccffcc"></div>
<div style="left:114px;top:178px;width:23px;height:16px;background:#ccffcc"></div>
<div style="left:300px;top:178px;width:23px;height:16px;background:#ccffcc"></div>
<div style="left:432px;top:178px;width:23px;height:16px;background:#ccffcc"></div>
<div style="left:24px;top:195px;width:35px;height:16px;background:#ccffcc"></div>
<div style="left:114px;top:195px;width:23px;height:16px;background:#ccffcc"></div>
<div style="left:300px;top:195px;width:23px;height:16px;background:#ccffcc"></div>
<div style="left:432px;top:195px;width:23px;height:16px;background:#ccffcc"></div>
<div style="left:24px;top:212px;width:35px;height:16px;background:#ccffcc"></div>
<div style="left:114px;top:212px;width:23px;height:16px;background:#ccffcc"></div>
<div style="left:300px;top:212px;width:23px;height:16px;background:#ccffcc"></div>
<div style="left:432px;top:212px;width:23px;height:16px;background:#ccffcc"></div>
<div style="left:7px;top:109px;width:509px;height:1px;background:#e8e8e8"></div>
<div style="left:7px;top:126px;width:509px;height:1px;background:#e8e8e8"></div>
<div style="left:7px;top:143px;width:509px;height:1px;background:#e8e8e8"></div>
<div style="left:7px;top:160px;width:509px;height:1px;background:#e8e8e8"></div>
<div style="left:7px;top:177px;width:509px;height:1px;background:#e8e8e8"></div>
<div style="left:7px;top:194px;width:509px;height:1px;background:#e8e8e8"></div>
<div style="left:7px;top:211px;width:509px;height:1px;background:#e8e8e8"></div>
<div style="left:7px;top:228px;width:509px;height:1px;background:#e8e8e8"></div>
<div style="left:7px;top:245px;width:509px;height:1px;background:#e8e8e8"></div>
<div style="left:7px;top:262px;width:509px;height:1px;background:#e8e8e8"></div>
<div style="left:7px;top:279px;width:509px;height:1px;background:#e8e8e8"></div>
<div style="left:7px;top:296px;width:509px;height:1px;background:#e8e8e8"></div>
<div style="left:7px;top:313px;width:509px;height:1px;background:#e8e8e8"></div>
<div style="left:23px;top:109px;width:1px;height:206px;background:#e8e8e8"></div>
<div style="left:59px;top:109px;width:1px;height:206px;background:#e8e8e8"></div>
<div style="left:113px;top:109px;width:1px;height:206px;background:#e8e8e8"></div>
<div style="left:137px;top:109px;width:1px;height:206px;background:#e8e8e8"></div>
<div style="left:191px;top:109px;width:1px;height:206px;background:#e8e8e8"></div>
<div style="left:245px;top:109px;width:1px;height:206px;background:#e8e8e8"></div>
<div style="left:299px;top:109px;width:1px;height:206px;background:#e8e8e8"></div>
<div style="left:323px;top:109px;width:1px;height:206px;background:#e8e8e8"></div>
<div style="left:371px;top:109px;width:1px;height:206px;background:#e8e8e8"></div>
<div style="left:431px;top:109px;width:1px;height:206px;background:#e8e8e8"></div>
<div style="left:455px;top:109px;width:1px;height:206px;background:#e8e8e8"></div>
<div style="left:515px;top:109px;width:1px;height:206px;background:#e8e8e8"></div>
<div style="left:6px;top:315px;width:511px;height:1px;background:#e3e3e3"></div>
<div style="left:5px;top:316px;width:513px;height:1px;background:#fff"></div>
<div style="left:516px;top:91px;width:1px;height:225px;background:#e3e3e3"></div>
<div style="left:517px;top:90px;width:1px;height:227px;background:#fff"></div>
<div class="hc" style="left:7px;top:92px;width:16px;height:16px;"></div>
<div class="hc" style="left:23px;top:92px;width:36px;height:16px;">参数</div>
<div class="hc" style="left:59px;top:92px;width:54px;height:16px;">幅值</div>
<div class="hc" style="left:113px;top:92px;width:24px;height:16px;">变</div>
<div class="hc" style="left:137px;top:92px;width:54px;height:16px;">步长</div>
<div class="hc" style="left:191px;top:92px;width:54px;height:16px;">上限</div>
<div class="hc" style="left:245px;top:92px;width:54px;height:16px;">相位</div>
<div class="hc" style="left:299px;top:92px;width:24px;height:16px;">变</div>
<div class="hc" style="left:323px;top:92px;width:48px;height:16px;">步长</div>
<div class="hc" style="left:371px;top:92px;width:60px;height:16px;">频率</div>
<div class="hc" style="left:431px;top:92px;width:24px;height:16px;">变</div>
<div class="hc" style="left:455px;top:92px;width:60px;height:16px;">步长</div>
<div style="left:515px;top:92px;width:1px;height:16px;background:#fff"></div>
<div class="cb" style="left:11px;top:112px"></div>
<svg style="left:13px;top:114px" width="9" height="9" viewBox="0 0 9 9"><path d="M1.2 3.4 L3.4 6.6 L7.6 1.2" stroke="#000" stroke-width="2.1" fill="none" stroke-linecap="square"/></svg>
<div class="m" style="left:23px;top:112px;width:37px">UA</div>
<div class="m" style="left:59px;top:112px;width:55px">57.735</div>
<div class="m" style="left:137px;top:112px;width:55px">1.000</div>
<div class="m" style="left:191px;top:112px;width:55px">120.000</div>
<div class="m" style="left:245px;top:112px;width:55px">0.00</div>
<div class="m" style="left:323px;top:112px;width:49px">1.00</div>
<div class="m" style="left:371px;top:112px;width:61px">50.000</div>
<div class="m" style="left:455px;top:112px;width:61px">1.000</div>
<div class="cb" style="left:11px;top:129px"></div>
<svg style="left:13px;top:131px" width="9" height="9" viewBox="0 0 9 9"><path d="M1.2 3.4 L3.4 6.6 L7.6 1.2" stroke="#000" stroke-width="2.1" fill="none" stroke-linecap="square"/></svg>
<div class="m" style="left:23px;top:129px;width:37px">UB</div>
<div class="m" style="left:59px;top:129px;width:55px">57.735</div>
<div class="m" style="left:137px;top:129px;width:55px">1.000</div>
<div class="m" style="left:191px;top:129px;width:55px">120.000</div>
<div class="m" style="left:245px;top:129px;width:55px">-120.00</div>
<div class="m" style="left:323px;top:129px;width:49px">1.00</div>
<div class="m" style="left:371px;top:129px;width:61px">50.000</div>
<div class="m" style="left:455px;top:129px;width:61px">1.000</div>
<div class="cb" style="left:11px;top:146px"></div>
<svg style="left:13px;top:148px" width="9" height="9" viewBox="0 0 9 9"><path d="M1.2 3.4 L3.4 6.6 L7.6 1.2" stroke="#000" stroke-width="2.1" fill="none" stroke-linecap="square"/></svg>
<div class="m" style="left:23px;top:146px;width:37px">UC</div>
<div class="m" style="left:59px;top:146px;width:55px">57.735</div>
<div class="m" style="left:137px;top:146px;width:55px">1.000</div>
<div class="m" style="left:191px;top:146px;width:55px">120.000</div>
<div class="m" style="left:245px;top:146px;width:55px">120.00</div>
<div class="m" style="left:323px;top:146px;width:49px">1.00</div>
<div class="m" style="left:371px;top:146px;width:61px">50.000</div>
<div class="m" style="left:455px;top:146px;width:61px">1.000</div>
<div class="cb" style="left:11px;top:163px"></div>
<svg style="left:13px;top:165px" width="9" height="9" viewBox="0 0 9 9"><path d="M1.2 3.4 L3.4 6.6 L7.6 1.2" stroke="#000" stroke-width="2.1" fill="none" stroke-linecap="square"/></svg>
<div class="m" style="left:23px;top:163px;width:37px">IA</div>
<div class="m" style="left:59px;top:163px;width:55px">3.378</div>
<div class="m" style="left:137px;top:163px;width:55px">1.000</div>
<div class="m" style="left:191px;top:163px;width:55px">30.000</div>
<div class="m" style="left:245px;top:163px;width:55px">0.00</div>
<div class="m" style="left:323px;top:163px;width:49px">1.00</div>
<div class="m" style="left:371px;top:163px;width:61px">50.000</div>
<div class="m" style="left:455px;top:163px;width:61px">1.000</div>
<div class="cb" style="left:11px;top:180px"></div>
<svg style="left:13px;top:182px" width="9" height="9" viewBox="0 0 9 9"><path d="M1.2 3.4 L3.4 6.6 L7.6 1.2" stroke="#000" stroke-width="2.1" fill="none" stroke-linecap="square"/></svg>
<div class="m" style="left:23px;top:180px;width:37px">IB</div>
<div class="m" style="left:59px;top:180px;width:55px">3.378</div>
<div class="m" style="left:137px;top:180px;width:55px">1.000</div>
<div class="m" style="left:191px;top:180px;width:55px">30.000</div>
<div class="m" style="left:245px;top:180px;width:55px">0.00</div>
<div class="m" style="left:323px;top:180px;width:49px">1.00</div>
<div class="m" style="left:371px;top:180px;width:61px">50.000</div>
<div class="m" style="left:455px;top:180px;width:61px">1.000</div>
<div class="cb" style="left:11px;top:197px"></div>
<svg style="left:13px;top:199px" width="9" height="9" viewBox="0 0 9 9"><path d="M1.2 3.4 L3.4 6.6 L7.6 1.2" stroke="#000" stroke-width="2.1" fill="none" stroke-linecap="square"/></svg>
<div class="m" style="left:23px;top:197px;width:37px">IC</div>
<div class="m" style="left:59px;top:197px;width:55px">0.000</div>
<div class="m" style="left:137px;top:197px;width:55px">1.000</div>
<div class="m" style="left:191px;top:197px;width:55px">30.000</div>
<div class="m" style="left:245px;top:197px;width:55px">120.00</div>
<div class="m" style="left:323px;top:197px;width:49px">1.00</div>
<div class="m" style="left:371px;top:197px;width:61px">50.000</div>
<div class="m" style="left:455px;top:197px;width:61px">1.000</div>
<div class="cb" style="left:11px;top:214px"></div>
<svg style="left:13px;top:216px" width="9" height="9" viewBox="0 0 9 9"><path d="M1.2 3.4 L3.4 6.6 L7.6 1.2" stroke="#000" stroke-width="2.1" fill="none" stroke-linecap="square"/></svg>
<div class="m" style="left:23px;top:214px;width:37px">Ux</div>
<div class="m" style="left:59px;top:214px;width:55px">57.735</div>
<div class="m" style="left:137px;top:214px;width:55px">1.000</div>
<div class="m" style="left:191px;top:214px;width:55px">120.000</div>
<div class="m" style="left:245px;top:214px;width:55px">0.00</div>
<div class="m" style="left:323px;top:214px;width:49px">1.00</div>
<div class="m" style="left:371px;top:214px;width:61px">50.000</div>
<div class="m" style="left:455px;top:214px;width:61px">1.000</div>
<div style="left:23px;top:178px;width:492px;height:15px;border-top:1px dotted #000;border-right:1px dotted #000"></div>
<div style="left:521px;top:70px;width:267px;height:256px;background:#000"></div>
<div style="left:521px;top:70px;width:267px;height:1px;background:#a0a0a0"></div>
<div style="left:521px;top:70px;width:1px;height:256px;background:#a0a0a0"></div>
<div style="left:522px;top:71px;width:265px;height:1px;background:#696969"></div>
<div style="left:522px;top:71px;width:1px;height:254px;background:#696969"></div>
<div style="left:522px;top:324px;width:265px;height:1px;background:#e3e3e3"></div>
<div style="left:786px;top:71px;width:1px;height:254px;background:#e3e3e3"></div>
<div style="left:521px;top:325px;width:267px;height:1px;background:#fff"></div>
<div style="left:787px;top:70px;width:1px;height:256px;background:#fff"></div>
<div style="left:523px;top:72px;width:263px;height:253px;background:#000"></div>
<svg style="left:0;top:0" width="793" height="593"><g shape-rendering="crispEdges"><circle cx="658.5" cy="198.5" r="16" fill="none" stroke="#787878" stroke-width="1"/><circle cx="658.5" cy="198.5" r="40" fill="none" stroke="#787878" stroke-width="1"/><circle cx="658.5" cy="198.5" r="64" fill="none" stroke="#787878" stroke-width="1"/><circle cx="658.5" cy="198.5" r="88" fill="none" stroke="#787878" stroke-width="1"/><circle cx="658.5" cy="198.5" r="112" fill="none" stroke="#787878" stroke-width="1"/><line x1="658.5" y1="198.5" x2="770.50" y2="198.50" stroke="#787878" stroke-width="1"/><line x1="658.5" y1="198.5" x2="755.49" y2="142.50" stroke="#787878" stroke-width="1"/><line x1="658.5" y1="198.5" x2="714.50" y2="101.51" stroke="#787878" stroke-width="1"/><line x1="658.5" y1="198.5" x2="658.50" y2="86.50" stroke="#787878" stroke-width="1"/><line x1="658.5" y1="198.5" x2="602.50" y2="101.51" stroke="#787878" stroke-width="1"/><line x1="658.5" y1="198.5" x2="561.51" y2="142.50" stroke="#787878" stroke-width="1"/><line x1="658.5" y1="198.5" x2="546.50" y2="198.50" stroke="#787878" stroke-width="1"/><line x1="658.5" y1="198.5" x2="561.51" y2="254.50" stroke="#787878" stroke-width="1"/><line x1="658.5" y1="198.5" x2="602.50" y2="295.49" stroke="#787878" stroke-width="1"/><line x1="658.5" y1="198.5" x2="658.50" y2="310.50" stroke="#787878" stroke-width="1"/><line x1="658.5" y1="198.5" x2="714.50" y2="295.49" stroke="#787878" stroke-width="1"/><line x1="658.5" y1="198.5" x2="755.49" y2="254.50" stroke="#787878" stroke-width="1"/></g><line x1="658.5" y1="198.5" x2="632.00" y2="152.60" stroke="#ff0000" stroke-width="1.3"/><line x1="632.00" y1="152.60" x2="632.00" y2="160.60" stroke="#ff0000" stroke-width="1.3"/><line x1="632.00" y1="152.60" x2="638.93" y2="156.60" stroke="#ff0000" stroke-width="1.3"/><line x1="658.5" y1="198.5" x2="632.00" y2="244.40" stroke="#00ff00" stroke-width="1.3"/><line x1="632.00" y1="244.40" x2="638.93" y2="240.40" stroke="#00ff00" stroke-width="1.3"/><line x1="632.00" y1="244.40" x2="632.00" y2="236.40" stroke="#00ff00" stroke-width="1.3"/><line x1="658.5" y1="198.5" x2="712.50" y2="198.50" stroke="#ffff00" stroke-width="1.3"/><line x1="712.50" y1="198.50" x2="705.57" y2="194.50" stroke="#ffff00" stroke-width="1.3"/><line x1="712.50" y1="198.50" x2="705.57" y2="202.50" stroke="#ffff00" stroke-width="1.3"/><line x1="658.5" y1="198.5" x2="667.50" y2="198.50" stroke="#00ff00" stroke-width="1.3"/><line x1="667.50" y1="198.50" x2="662.30" y2="195.50" stroke="#00ff00" stroke-width="1.3"/><line x1="667.50" y1="198.50" x2="662.30" y2="201.50" stroke="#00ff00" stroke-width="1.3"/><line x1="531" y1="75" x2="562" y2="75" stroke="#e0a000" stroke-width="2" shape-rendering="crispEdges"/><path d="M556 71.5 L561 75 L556 78" stroke="#e0a000" stroke-width="1.4" fill="none"/><line x1="531" y1="85" x2="562" y2="85" stroke="#00ffff" stroke-width="2" shape-rendering="crispEdges"/><path d="M556 81.5 L561 85 L556 88" stroke="#00ffff" stroke-width="1.4" fill="none"/><line x1="531" y1="95" x2="562" y2="95" stroke="#ff00ff" stroke-width="2" shape-rendering="crispEdges"/><path d="M556 91.5 L561 95 L556 98" stroke="#ff00ff" stroke-width="1.4" fill="none"/><line x1="737" y1="75" x2="770" y2="75" stroke="#e0a000" stroke-width="2" shape-rendering="crispEdges"/><path d="M764 71.5 L769 75 L764 78" stroke="#e0a000" stroke-width="1.4" fill="none"/><line x1="737" y1="85" x2="770" y2="85" stroke="#00ffff" stroke-width="2" shape-rendering="crispEdges"/><path d="M764 81.5 L769 85 L764 88" stroke="#00ffff" stroke-width="1.4" fill="none"/><line x1="737" y1="95" x2="770" y2="95" stroke="#ff00ff" stroke-width="2" shape-rendering="crispEdges"/><path d="M764 91.5 L769 95 L764 98" stroke="#ff00ff" stroke-width="1.4" fill="none"/><line x1="531" y1="293" x2="562" y2="293" stroke="#ffff00" stroke-width="2" shape-rendering="crispEdges"/><path d="M556 289.5 L561 293 L556 296" stroke="#ffff00" stroke-width="1.4" fill="none"/><line x1="531" y1="303" x2="562" y2="303" stroke="#00ff00" stroke-width="2" shape-rendering="crispEdges"/><path d="M556 299.5 L561 303 L556 306" stroke="#00ff00" stroke-width="1.4" fill="none"/><line x1="531" y1="313" x2="562" y2="313" stroke="#ff0000" stroke-width="2" shape-rendering="crispEdges"/><path d="M556 309.5 L561 313 L556 316" stroke="#ff0000" stroke-width="1.4" fill="none"/><line x1="737" y1="293" x2="770" y2="293" stroke="#ffff00" stroke-width="2" shape-rendering="crispEdges"/><path d="M764 289.5 L769 293 L764 296" stroke="#ffff00" stroke-width="1.4" fill="none"/><line x1="737" y1="303" x2="770" y2="303" stroke="#00ff00" stroke-width="2" shape-rendering="crispEdges"/><path d="M764 299.5 L769 303 L764 306" stroke="#00ff00" stroke-width="1.4" fill="none"/><line x1="737" y1="313" x2="770" y2="313" stroke="#ff0000" stroke-width="2" shape-rendering="crispEdges"/><path d="M764 309.5 L769 313 L764 316" stroke="#ff0000" stroke-width="1.4" fill="none"/></svg>
<div class="lg" style="left:562px;top:75px;color:#e0a000">Ua</div>
<div class="lg" style="left:562px;top:85px;color:#00ffff">Ub</div>
<div class="lg" style="left:562px;top:95px;color:#ff00ff">Uc</div>
<div class="lg" style="left:771px;top:75px;color:#e0a000">Ia</div>
<div class="lg" style="left:771px;top:85px;color:#00ffff">Ib</div>
<div class="lg" style="left:771px;top:95px;color:#ff00ff">Ic</div>
<div class="lg" style="left:562px;top:290px;color:#ffff00">UA</div>
<div class="lg" style="left:562px;top:300px;color:#00ff00">UB</div>
<div class="lg" style="left:562px;top:310px;color:#ff0000">UC</div>
<div class="lg" style="left:771px;top:290px;color:#ffff00">IA</div>
<div class="lg" style="left:771px;top:300px;color:#00ff00">IB</div>
<div class="lg" style="left:771px;top:310px;color:#ff0000">IC</div>
<div style="left:6px;top:349px;width:158px;height:215px;background:#fff"></div>
<div style="left:6px;top:349px;width:158px;height:1px;background:#a0a0a0"></div>
<div style="left:6px;top:349px;width:1px;height:215px;background:#a0a0a0"></div>
<div style="left:7px;top:350px;width:156px;height:1px;background:#696969"></div>
<div style="left:7px;top:350px;width:1px;height:213px;background:#696969"></div>
<div style="left:7px;top:562px;width:156px;height:1px;background:#e3e3e3"></div>
<div style="left:162px;top:350px;width:1px;height:213px;background:#e3e3e3"></div>
<div style="left:6px;top:563px;width:158px;height:1px;background:#fff"></div>
<div style="left:163px;top:349px;width:1px;height:215px;background:#fff"></div>
<div style="left:8px;top:367px;width:137px;height:195px;background:#fff"></div>
<div style="left:8px;top:369px;width:64px;height:16px;background:#ccffcc"></div>
<div style="left:73px;top:369px;width:71px;height:16px;background:#ffffcc"></div>
<div style="left:8px;top:386px;width:64px;height:16px;background:#ccffcc"></div>
<div style="left:73px;top:386px;width:71px;height:16px;background:#ffffcc"></div>
<div style="left:8px;top:403px;width:64px;height:16px;background:#ccffcc"></div>
<div style="left:73px;top:403px;width:71px;height:16px;background:#ffffcc"></div>
<div style="left:8px;top:420px;width:64px;height:16px;background:#ccffcc"></div>
<div style="left:73px;top:420px;width:71px;height:16px;background:#ffffcc"></div>
<div style="left:8px;top:437px;width:64px;height:16px;background:#ccffcc"></div>
<div style="left:8px;top:454px;width:64px;height:16px;background:#ccffcc"></div>
<div style="left:8px;top:471px;width:64px;height:16px;background:#ccffcc"></div>
<div style="left:73px;top:471px;width:71px;height:16px;background:#f0fff0"></div>
<div style="left:8px;top:488px;width:64px;height:16px;background:#ccffcc"></div>
<div style="left:73px;top:488px;width:71px;height:16px;background:#f0fff0"></div>
<div style="left:8px;top:505px;width:64px;height:16px;background:#ccffcc"></div>
<div style="left:73px;top:505px;width:71px;height:16px;background:#f0fff0"></div>
<div style="left:8px;top:522px;width:64px;height:16px;background:#ccffcc"></div>
<div style="left:73px;top:522px;width:71px;height:16px;background:#f0fff0"></div>
<div style="left:8px;top:539px;width:64px;height:16px;background:#ccffcc"></div>
<div style="left:73px;top:539px;width:71px;height:16px;background:#f0fff0"></div>
<div style="left:8px;top:556px;width:64px;height:6px;background:#ccffcc"></div>
<div style="left:73px;top:556px;width:71px;height:6px;background:#f0fff0"></div>
<div style="left:8px;top:368px;width:137px;height:1px;background:#e8e8e8"></div>
<div style="left:8px;top:385px;width:137px;height:1px;background:#e8e8e8"></div>
<div style="left:8px;top:402px;width:137px;height:1px;background:#e8e8e8"></div>
<div style="left:8px;top:419px;width:137px;height:1px;background:#e8e8e8"></div>
<div style="left:8px;top:436px;width:137px;height:1px;background:#e8e8e8"></div>
<div style="left:8px;top:453px;width:137px;height:1px;background:#e8e8e8"></div>
<div style="left:8px;top:470px;width:137px;height:1px;background:#e8e8e8"></div>
<div style="left:8px;top:487px;width:137px;height:1px;background:#e8e8e8"></div>
<div style="left:8px;top:504px;width:137px;height:1px;background:#e8e8e8"></div>
<div style="left:8px;top:521px;width:137px;height:1px;background:#e8e8e8"></div>
<div style="left:8px;top:538px;width:137px;height:1px;background:#e8e8e8"></div>
<div style="left:8px;top:555px;width:137px;height:1px;background:#e8e8e8"></div>
<div style="left:72px;top:368px;width:1px;height:194px;background:#e8e8e8"></div>
<div style="left:144px;top:368px;width:1px;height:194px;background:#e8e8e8"></div>
<div style="left:7px;top:562px;width:155px;height:1px;background:#e3e3e3"></div>
<div style="left:6px;top:563px;width:158px;height:1px;background:#fff"></div>
<div class="hc" style="left:8px;top:351px;width:64px;height:16px;">数据项</div>
<div class="hc" style="left:72px;top:351px;width:72px;height:16px;">值</div>
<div style="left:144px;top:351px;width:1px;height:211px;background:#fff"></div>
<div style="left:145px;top:351px;width:17px;height:211px;background:#f0f0f0"></div>
<div style="left:146px;top:368px;width:15px;height:139px;background:#cdcdcd"></div>
<svg style="left:0;top:0" width="793" height="593"><path d="M150.0 362 L153.5 358.5 L157.0 362" stroke="#606060" stroke-width="2.2" fill="none"/><path d="M150.0 551.5 L153.5 555.5 L157.0 551.5" stroke="#606060" stroke-width="2.2" fill="none"/></svg>
<div class="ui t" style="left:7px;top:369px;width:65px">变化方式</div>
<div class="ui t" style="left:72px;top:369px;width:72px">手动试验</div>
<div class="m" style="left:8px;top:388px;width:65px">Ux=</div>
<div class="ui t" style="left:72px;top:386px;width:72px">任意值</div>
<div class="ui t" style="left:7px;top:403px;width:65px">动作方式</div>
<div class="ui t" style="left:72px;top:403px;width:72px">动作停止</div>
<div class="ui t" style="left:7px;top:420px;width:65px">开入逻辑</div>
<div class="ui t" style="left:72px;top:420px;width:72px">逻辑或</div>
<div class="ui t" style="left:7px;top:437px;width:65px">间隔时间</div>
<div class="m" style="left:73px;top:439px;width:72px">1.000 s</div>
<div class="ui t" style="left:7px;top:454px;width:65px">防抖时间</div>
<div class="m" style="left:73px;top:456px;width:72px">5 ms</div>
<div class="ui t" style="left:7px;top:471px;width:65px">开出<span class="d">1</span></div>
<div class="ui t" style="left:72px;top:471px;width:72px">分</div>
<div class="ui t" style="left:7px;top:488px;width:65px">开出<span class="d">2</span></div>
<div class="ui t" style="left:72px;top:488px;width:72px">分</div>
<div class="ui t" style="left:7px;top:505px;width:65px">开出<span class="d">3</span></div>
<div class="ui t" style="left:72px;top:505px;width:72px">分</div>
<div class="ui t" style="left:7px;top:522px;width:65px">开出<span class="d">4</span></div>
<div class="ui t" style="left:72px;top:522px;width:72px">分</div>
<div class="ui t" style="left:7px;top:539px;width:65px">开出<span class="d">5</span></div>
<div class="ui t" style="left:72px;top:539px;width:72px">分</div>
<div style="left:0;top:0;width:793px;height:562px;overflow:hidden">
<div class="ui t" style="left:7px;top:556px;width:65px">开出<span class="d">6</span></div>
<div class="ui t" style="left:72px;top:556px;width:72px">分</div>
</div>
<div style="left:6px;top:562px;width:157px;height:1px;background:#e3e3e3"></div>
<div style="left:6px;top:563px;width:158px;height:1px;background:#fff"></div>
<div style="left:144px;top:562px;width:19px;height:1px;background:#e3e3e3"></div>
<div style="left:173px;top:349px;width:184px;height:195px;background:#fff"></div>
<div style="left:173px;top:349px;width:184px;height:1px;background:#a0a0a0"></div>
<div style="left:173px;top:349px;width:1px;height:195px;background:#a0a0a0"></div>
<div style="left:174px;top:350px;width:182px;height:1px;background:#696969"></div>
<div style="left:174px;top:350px;width:1px;height:193px;background:#696969"></div>
<div style="left:174px;top:542px;width:182px;height:1px;background:#e3e3e3"></div>
<div style="left:355px;top:350px;width:1px;height:193px;background:#e3e3e3"></div>
<div style="left:173px;top:543px;width:184px;height:1px;background:#fff"></div>
<div style="left:356px;top:349px;width:1px;height:195px;background:#fff"></div>
<div style="left:175px;top:367px;width:180px;height:175px;background:#fff"></div>
<div style="left:196px;top:369px;width:27px;height:16px;background:#ccffcc"></div>
<div style="left:224px;top:369px;width:65px;height:16px;background:#f0fff0"></div>
<div style="left:290px;top:369px;width:65px;height:16px;background:#f0fff0"></div>
<div style="left:196px;top:386px;width:27px;height:16px;background:#ccffcc"></div>
<div style="left:224px;top:386px;width:65px;height:16px;background:#f0fff0"></div>
<div style="left:290px;top:386px;width:65px;height:16px;background:#f0fff0"></div>
<div style="left:196px;top:403px;width:27px;height:16px;background:#ccffcc"></div>
<div style="left:224px;top:403px;width:65px;height:16px;background:#f0fff0"></div>
<div style="left:290px;top:403px;width:65px;height:16px;background:#f0fff0"></div>
<div style="left:196px;top:420px;width:27px;height:16px;background:#ccffcc"></div>
<div style="left:224px;top:420px;width:65px;height:16px;background:#f0fff0"></div>
<div style="left:290px;top:420px;width:65px;height:16px;background:#f0fff0"></div>
<div style="left:196px;top:437px;width:27px;height:16px;background:#ccffcc"></div>
<div style="left:224px;top:437px;width:65px;height:16px;background:#f0fff0"></div>
<div style="left:290px;top:437px;width:65px;height:16px;background:#f0fff0"></div>
<div style="left:196px;top:454px;width:27px;height:16px;background:#ccffcc"></div>
<div style="left:224px;top:454px;width:65px;height:16px;background:#f0fff0"></div>
<div style="left:290px;top:454px;width:65px;height:16px;background:#f0fff0"></div>
<div style="left:196px;top:471px;width:27px;height:16px;background:#ccffcc"></div>
<div style="left:224px;top:471px;width:65px;height:16px;background:#f0fff0"></div>
<div style="left:290px;top:471px;width:65px;height:16px;background:#f0fff0"></div>
<div style="left:196px;top:488px;width:27px;height:16px;background:#ccffcc"></div>
<div style="left:224px;top:488px;width:65px;height:16px;background:#f0fff0"></div>
<div style="left:290px;top:488px;width:65px;height:16px;background:#f0fff0"></div>
<div style="left:196px;top:505px;width:27px;height:16px;background:#ccffcc"></div>
<div style="left:224px;top:505px;width:65px;height:16px;background:#f0fff0"></div>
<div style="left:290px;top:505px;width:65px;height:16px;background:#f0fff0"></div>
<div style="left:196px;top:522px;width:27px;height:16px;background:#ccffcc"></div>
<div style="left:224px;top:522px;width:65px;height:16px;background:#f0fff0"></div>
<div style="left:290px;top:522px;width:65px;height:16px;background:#f0fff0"></div>
<div style="left:175px;top:368px;width:180px;height:1px;background:#e8e8e8"></div>
<div style="left:175px;top:385px;width:180px;height:1px;background:#e8e8e8"></div>
<div style="left:175px;top:402px;width:180px;height:1px;background:#e8e8e8"></div>
<div style="left:175px;top:419px;width:180px;height:1px;background:#e8e8e8"></div>
<div style="left:175px;top:436px;width:180px;height:1px;background:#e8e8e8"></div>
<div style="left:175px;top:453px;width:180px;height:1px;background:#e8e8e8"></div>
<div style="left:175px;top:470px;width:180px;height:1px;background:#e8e8e8"></div>
<div style="left:175px;top:487px;width:180px;height:1px;background:#e8e8e8"></div>
<div style="left:175px;top:504px;width:180px;height:1px;background:#e8e8e8"></div>
<div style="left:175px;top:521px;width:180px;height:1px;background:#e8e8e8"></div>
<div style="left:175px;top:538px;width:180px;height:1px;background:#e8e8e8"></div>
<div style="left:195px;top:368px;width:1px;height:174px;background:#e8e8e8"></div>
<div style="left:223px;top:368px;width:1px;height:174px;background:#e8e8e8"></div>
<div style="left:289px;top:368px;width:1px;height:174px;background:#e8e8e8"></div>
<div style="left:355px;top:368px;width:1px;height:174px;background:#e8e8e8"></div>
<div style="left:174px;top:542px;width:182px;height:1px;background:#e3e3e3"></div>
<div style="left:173px;top:543px;width:184px;height:1px;background:#fff"></div>
<div style="left:355px;top:350px;width:1px;height:193px;background:#e3e3e3"></div>
<div style="left:356px;top:349px;width:1px;height:195px;background:#fff"></div>
<div class="hc" style="left:175px;top:351px;width:20px;height:16px;"></div>
<div class="hc" style="left:195px;top:351px;width:28px;height:16px;font-family:'Liberation Mono';font-size:11px;letter-spacing:-0.6px">DI</div>
<div class="hc" style="left:223px;top:351px;width:66px;height:16px;">动作时间</div>
<div class="hc" style="left:289px;top:351px;width:66px;height:16px;">返回时间</div>
<div class="cb" style="left:179px;top:371px"></div>
<svg style="left:181px;top:373px" width="9" height="9" viewBox="0 0 9 9"><path d="M1.2 3.4 L3.4 6.6 L7.6 1.2" stroke="#000" stroke-width="2.1" fill="none" stroke-linecap="square"/></svg>
<div class="m" style="left:195px;top:371px;width:29px">A</div>
<div class="cb" style="left:179px;top:388px"></div>
<svg style="left:181px;top:390px" width="9" height="9" viewBox="0 0 9 9"><path d="M1.2 3.4 L3.4 6.6 L7.6 1.2" stroke="#000" stroke-width="2.1" fill="none" stroke-linecap="square"/></svg>
<div class="m" style="left:195px;top:388px;width:29px">B</div>
<div class="cb" style="left:179px;top:405px"></div>
<svg style="left:181px;top:407px" width="9" height="9" viewBox="0 0 9 9"><path d="M1.2 3.4 L3.4 6.6 L7.6 1.2" stroke="#000" stroke-width="2.1" fill="none" stroke-linecap="square"/></svg>
<div class="m" style="left:195px;top:405px;width:29px">C</div>
<div class="cb" style="left:179px;top:422px"></div>
<svg style="left:181px;top:424px" width="9" height="9" viewBox="0 0 9 9"><path d="M1.2 3.4 L3.4 6.6 L7.6 1.2" stroke="#000" stroke-width="2.1" fill="none" stroke-linecap="square"/></svg>
<div class="m" style="left:195px;top:422px;width:29px">R</div>
<div class="cb" style="left:179px;top:439px"></div>
<svg style="left:181px;top:441px" width="9" height="9" viewBox="0 0 9 9"><path d="M1.2 3.4 L3.4 6.6 L7.6 1.2" stroke="#000" stroke-width="2.1" fill="none" stroke-linecap="square"/></svg>
<div class="m" style="left:195px;top:439px;width:29px">a</div>
<div class="cb" style="left:179px;top:456px"></div>
<svg style="left:181px;top:458px" width="9" height="9" viewBox="0 0 9 9"><path d="M1.2 3.4 L3.4 6.6 L7.6 1.2" stroke="#000" stroke-width="2.1" fill="none" stroke-linecap="square"/></svg>
<div class="m" style="left:195px;top:456px;width:29px">b</div>
<div class="cb" style="left:179px;top:473px"></div>
<svg style="left:181px;top:475px" width="9" height="9" viewBox="0 0 9 9"><path d="M1.2 3.4 L3.4 6.6 L7.6 1.2" stroke="#000" stroke-width="2.1" fill="none" stroke-linecap="square"/></svg>
<div class="m" style="left:195px;top:473px;width:29px">c</div>
<div class="cb" style="left:179px;top:490px"></div>
<svg style="left:181px;top:492px" width="9" height="9" viewBox="0 0 9 9"><path d="M1.2 3.4 L3.4 6.6 L7.6 1.2" stroke="#000" stroke-width="2.1" fill="none" stroke-linecap="square"/></svg>
<div class="m" style="left:195px;top:490px;width:29px">r</div>
<div class="cb" style="left:179px;top:507px"></div>
<svg style="left:181px;top:509px" width="9" height="9" viewBox="0 0 9 9"><path d="M1.2 3.4 L3.4 6.6 L7.6 1.2" stroke="#000" stroke-width="2.1" fill="none" stroke-linecap="square"/></svg>
<div class="m" style="left:195px;top:507px;width:29px">E</div>
<div class="cb" style="left:179px;top:524px"></div>
<svg style="left:181px;top:526px" width="9" height="9" viewBox="0 0 9 9"><path d="M1.2 3.4 L3.4 6.6 L7.6 1.2" stroke="#000" stroke-width="2.1" fill="none" stroke-linecap="square"/></svg>
<div class="m" style="left:195px;top:524px;width:29px">e</div>
<div style="left:365px;top:349px;width:170px;height:215px;background:#fff"></div>
<div style="left:365px;top:349px;width:170px;height:1px;background:#a0a0a0"></div>
<div style="left:365px;top:349px;width:1px;height:215px;background:#a0a0a0"></div>
<div style="left:366px;top:350px;width:168px;height:1px;background:#696969"></div>
<div style="left:366px;top:350px;width:1px;height:213px;background:#696969"></div>
<div style="left:366px;top:562px;width:168px;height:1px;background:#e3e3e3"></div>
<div style="left:533px;top:350px;width:1px;height:213px;background:#e3e3e3"></div>
<div style="left:365px;top:563px;width:170px;height:1px;background:#fff"></div>
<div style="left:534px;top:349px;width:1px;height:215px;background:#fff"></div>
<div style="left:367px;top:367px;width:149px;height:195px;background:#fff"></div>
<div style="left:367px;top:369px;width:36px;height:16px;background:#ccffcc"></div>
<div style="left:404px;top:369px;width:55px;height:16px;background:#f0fff0"></div>
<div style="left:460px;top:369px;width:55px;height:16px;background:#f0fff0"></div>
<div style="left:367px;top:386px;width:36px;height:16px;background:#ccffcc"></div>
<div style="left:404px;top:386px;width:55px;height:16px;background:#f0fff0"></div>
<div style="left:460px;top:386px;width:55px;height:16px;background:#f0fff0"></div>
<div style="left:367px;top:403px;width:36px;height:16px;background:#ccffcc"></div>
<div style="left:404px;top:403px;width:55px;height:16px;background:#f0fff0"></div>
<div style="left:460px;top:403px;width:55px;height:16px;background:#f0fff0"></div>
<div style="left:367px;top:420px;width:36px;height:16px;background:#ccffcc"></div>
<div style="left:404px;top:420px;width:55px;height:16px;background:#f0fff0"></div>
<div style="left:460px;top:420px;width:55px;height:16px;background:#f0fff0"></div>
<div style="left:367px;top:437px;width:36px;height:16px;background:#ccffcc"></div>
<div style="left:404px;top:437px;width:55px;height:16px;background:#f0fff0"></div>
<div style="left:460px;top:437px;width:55px;height:16px;background:#f0fff0"></div>
<div style="left:367px;top:454px;width:36px;height:16px;background:#ccffcc"></div>
<div style="left:404px;top:454px;width:55px;height:16px;background:#f0fff0"></div>
<div style="left:460px;top:454px;width:55px;height:16px;background:#f0fff0"></div>
<div style="left:367px;top:471px;width:36px;height:16px;background:#ccffcc"></div>
<div style="left:404px;top:471px;width:55px;height:16px;background:#f0fff0"></div>
<div style="left:460px;top:471px;width:55px;height:16px;background:#f0fff0"></div>
<div style="left:367px;top:488px;width:36px;height:16px;background:#ccffcc"></div>
<div style="left:404px;top:488px;width:55px;height:16px;background:#f0fff0"></div>
<div style="left:460px;top:488px;width:55px;height:16px;background:#f0fff0"></div>
<div style="left:367px;top:505px;width:36px;height:16px;background:#ccffcc"></div>
<div style="left:404px;top:505px;width:55px;height:16px;background:#f0fff0"></div>
<div style="left:460px;top:505px;width:55px;height:16px;background:#f0fff0"></div>
<div style="left:367px;top:522px;width:36px;height:16px;background:#ccffcc"></div>
<div style="left:404px;top:522px;width:55px;height:16px;background:#f0fff0"></div>
<div style="left:460px;top:522px;width:55px;height:16px;background:#f0fff0"></div>
<div style="left:367px;top:539px;width:36px;height:16px;background:#ccffcc"></div>
<div style="left:404px;top:539px;width:55px;height:16px;background:#f0fff0"></div>
<div style="left:460px;top:539px;width:55px;height:16px;background:#f0fff0"></div>
<div style="left:367px;top:556px;width:36px;height:6px;background:#ccffcc"></div>
<div style="left:404px;top:556px;width:55px;height:6px;background:#f0fff0"></div>
<div style="left:460px;top:556px;width:55px;height:6px;background:#f0fff0"></div>
<div style="left:367px;top:368px;width:149px;height:1px;background:#e8e8e8"></div>
<div style="left:367px;top:385px;width:149px;height:1px;background:#e8e8e8"></div>
<div style="left:367px;top:402px;width:149px;height:1px;background:#e8e8e8"></div>
<div style="left:367px;top:419px;width:149px;height:1px;background:#e8e8e8"></div>
<div style="left:367px;top:436px;width:149px;height:1px;background:#e8e8e8"></div>
<div style="left:367px;top:453px;width:149px;height:1px;background:#e8e8e8"></div>
<div style="left:367px;top:470px;width:149px;height:1px;background:#e8e8e8"></div>
<div style="left:367px;top:487px;width:149px;height:1px;background:#e8e8e8"></div>
<div style="left:367px;top:504px;width:149px;height:1px;background:#e8e8e8"></div>
<div style="left:367px;top:521px;width:149px;height:1px;background:#e8e8e8"></div>
<div style="left:367px;top:538px;width:149px;height:1px;background:#e8e8e8"></div>
<div style="left:367px;top:555px;width:149px;height:1px;background:#e8e8e8"></div>
<div style="left:403px;top:368px;width:1px;height:194px;background:#e8e8e8"></div>
<div style="left:459px;top:368px;width:1px;height:194px;background:#e8e8e8"></div>
<div style="left:515px;top:368px;width:1px;height:194px;background:#e8e8e8"></div>
<div class="hc" style="left:367px;top:351px;width:36px;height:16px;">参数</div>
<div class="hc" style="left:403px;top:351px;width:56px;height:16px;">幅值</div>
<div class="hc" style="left:459px;top:351px;width:56px;height:16px;">相位</div>
<div style="left:515px;top:351px;width:1px;height:211px;background:#fff"></div>
<div style="left:516px;top:351px;width:17px;height:211px;background:#f0f0f0"></div>
<div style="left:517px;top:368px;width:15px;height:108px;background:#cdcdcd"></div>
<svg style="left:0;top:0" width="793" height="593"><path d="M521.0 362 L524.5 358.5 L528.0 362" stroke="#606060" stroke-width="2.2" fill="none"/><path d="M521.0 551.5 L524.5 555.5 L528.0 551.5" stroke="#606060" stroke-width="2.2" fill="none"/></svg>
<div style="left:366px;top:562px;width:168px;height:1px;background:#e3e3e3"></div>
<div style="left:365px;top:563px;width:170px;height:1px;background:#fff"></div>
<div class="m" style="left:367px;top:371px;width:37px">UAB</div>
<div class="m" style="left:403px;top:371px;width:57px">100.000</div>
<div class="m" style="left:459px;top:371px;width:57px">30.00</div>
<div class="m" style="left:367px;top:388px;width:37px">UBC</div>
<div class="m" style="left:403px;top:388px;width:57px">100.000</div>
<div class="m" style="left:459px;top:388px;width:57px">-90.00</div>
<div class="m" style="left:367px;top:405px;width:37px">UCA</div>
<div class="m" style="left:403px;top:405px;width:57px">100.000</div>
<div class="m" style="left:459px;top:405px;width:57px">150.00</div>
<div class="m" style="left:367px;top:422px;width:37px">Uo</div>
<div class="m" style="left:403px;top:422px;width:57px">0.000</div>
<div class="m" style="left:459px;top:422px;width:57px">180.00</div>
<div class="m" style="left:367px;top:439px;width:37px">U+</div>
<div class="m" style="left:403px;top:439px;width:57px">57.735</div>
<div class="m" style="left:459px;top:439px;width:57px">0.00</div>
<div class="m" style="left:367px;top:456px;width:37px">U-</div>
<div class="m" style="left:403px;top:456px;width:57px">0.000</div>
<div class="m" style="left:459px;top:456px;width:57px">0.00</div>
<div class="m" style="left:367px;top:473px;width:37px">Io</div>
<div class="m" style="left:403px;top:473px;width:57px">2.252</div>
<div class="m" style="left:459px;top:473px;width:57px">0.00</div>
<div class="m" style="left:367px;top:490px;width:37px">I+</div>
<div class="m" style="left:403px;top:490px;width:57px">1.126</div>
<div class="m" style="left:459px;top:490px;width:57px">60.00</div>
<div class="m" style="left:367px;top:507px;width:37px">I-</div>
<div class="m" style="left:403px;top:507px;width:57px">1.126</div>
<div class="m" style="left:459px;top:507px;width:57px">-60.00</div>
<div style="left:545px;top:349px;width:237px;height:215px;background:#fff"></div>
<div style="left:545px;top:349px;width:237px;height:1px;background:#a0a0a0"></div>
<div style="left:545px;top:349px;width:1px;height:215px;background:#a0a0a0"></div>
<div style="left:546px;top:350px;width:235px;height:1px;background:#696969"></div>
<div style="left:546px;top:350px;width:1px;height:213px;background:#696969"></div>
<div style="left:546px;top:562px;width:235px;height:1px;background:#e3e3e3"></div>
<div style="left:780px;top:350px;width:1px;height:213px;background:#e3e3e3"></div>
<div style="left:545px;top:563px;width:237px;height:1px;background:#fff"></div>
<div style="left:781px;top:349px;width:1px;height:215px;background:#fff"></div>
<div style="left:547px;top:367px;width:216px;height:195px;background:#fff"></div>
<div style="left:547px;top:369px;width:40px;height:16px;background:#ccffcc"></div>
<div style="left:588px;top:369px;width:57px;height:16px;background:#f0fff0"></div>
<div style="left:646px;top:369px;width:57px;height:16px;background:#f0fff0"></div>
<div style="left:704px;top:369px;width:59px;height:16px;background:#f0fff0"></div>
<div style="left:547px;top:386px;width:40px;height:16px;background:#ccffcc"></div>
<div style="left:588px;top:386px;width:57px;height:16px;background:#f0fff0"></div>
<div style="left:646px;top:386px;width:57px;height:16px;background:#f0fff0"></div>
<div style="left:704px;top:386px;width:59px;height:16px;background:#f0fff0"></div>
<div style="left:547px;top:403px;width:40px;height:16px;background:#ccffcc"></div>
<div style="left:588px;top:403px;width:57px;height:16px;background:#f0fff0"></div>
<div style="left:646px;top:403px;width:57px;height:16px;background:#f0fff0"></div>
<div style="left:704px;top:403px;width:59px;height:16px;background:#f0fff0"></div>
<div style="left:547px;top:420px;width:40px;height:16px;background:#ccffcc"></div>
<div style="left:588px;top:420px;width:57px;height:16px;background:#f0fff0"></div>
<div style="left:646px;top:420px;width:57px;height:16px;background:#f0fff0"></div>
<div style="left:704px;top:420px;width:59px;height:16px;background:#f0fff0"></div>
<div style="left:547px;top:437px;width:40px;height:16px;background:#ccffcc"></div>
<div style="left:588px;top:437px;width:57px;height:16px;background:#f0fff0"></div>
<div style="left:646px;top:437px;width:57px;height:16px;background:#f0fff0"></div>
<div style="left:704px;top:437px;width:59px;height:16px;background:#f0fff0"></div>
<div style="left:547px;top:454px;width:40px;height:16px;background:#ccffcc"></div>
<div style="left:588px;top:454px;width:57px;height:16px;background:#f0fff0"></div>
<div style="left:646px;top:454px;width:57px;height:16px;background:#f0fff0"></div>
<div style="left:704px;top:454px;width:59px;height:16px;background:#f0fff0"></div>
<div style="left:547px;top:471px;width:40px;height:16px;background:#ccffcc"></div>
<div style="left:588px;top:471px;width:57px;height:16px;background:#f0fff0"></div>
<div style="left:646px;top:471px;width:57px;height:16px;background:#f0fff0"></div>
<div style="left:704px;top:471px;width:59px;height:16px;background:#f0fff0"></div>
<div style="left:547px;top:488px;width:40px;height:16px;background:#ccffcc"></div>
<div style="left:588px;top:488px;width:57px;height:16px;background:#f0fff0"></div>
<div style="left:646px;top:488px;width:57px;height:16px;background:#f0fff0"></div>
<div style="left:704px;top:488px;width:59px;height:16px;background:#f0fff0"></div>
<div style="left:547px;top:505px;width:40px;height:16px;background:#ccffcc"></div>
<div style="left:588px;top:505px;width:57px;height:16px;background:#f0fff0"></div>
<div style="left:646px;top:505px;width:57px;height:16px;background:#f0fff0"></div>
<div style="left:704px;top:505px;width:59px;height:16px;background:#f0fff0"></div>
<div style="left:547px;top:522px;width:40px;height:16px;background:#ccffcc"></div>
<div style="left:588px;top:522px;width:57px;height:16px;background:#f0fff0"></div>
<div style="left:646px;top:522px;width:57px;height:16px;background:#f0fff0"></div>
<div style="left:704px;top:522px;width:59px;height:16px;background:#f0fff0"></div>
<div style="left:547px;top:539px;width:40px;height:16px;background:#ccffcc"></div>
<div style="left:588px;top:539px;width:57px;height:16px;background:#f0fff0"></div>
<div style="left:646px;top:539px;width:57px;height:16px;background:#f0fff0"></div>
<div style="left:704px;top:539px;width:59px;height:16px;background:#f0fff0"></div>
<div style="left:547px;top:556px;width:40px;height:6px;background:#ccffcc"></div>
<div style="left:588px;top:556px;width:57px;height:6px;background:#f0fff0"></div>
<div style="left:646px;top:556px;width:57px;height:6px;background:#f0fff0"></div>
<div style="left:704px;top:556px;width:59px;height:6px;background:#f0fff0"></div>
<div style="left:547px;top:368px;width:216px;height:1px;background:#e8e8e8"></div>
<div style="left:547px;top:385px;width:216px;height:1px;background:#e8e8e8"></div>
<div style="left:547px;top:402px;width:216px;height:1px;background:#e8e8e8"></div>
<div style="left:547px;top:419px;width:216px;height:1px;background:#e8e8e8"></div>
<div style="left:547px;top:436px;width:216px;height:1px;background:#e8e8e8"></div>
<div style="left:547px;top:453px;width:216px;height:1px;background:#e8e8e8"></div>
<div style="left:547px;top:470px;width:216px;height:1px;background:#e8e8e8"></div>
<div style="left:547px;top:487px;width:216px;height:1px;background:#e8e8e8"></div>
<div style="left:547px;top:504px;width:216px;height:1px;background:#e8e8e8"></div>
<div style="left:547px;top:521px;width:216px;height:1px;background:#e8e8e8"></div>
<div style="left:547px;top:538px;width:216px;height:1px;background:#e8e8e8"></div>
<div style="left:547px;top:555px;width:216px;height:1px;background:#e8e8e8"></div>
<div style="left:587px;top:368px;width:1px;height:194px;background:#e8e8e8"></div>
<div style="left:645px;top:368px;width:1px;height:194px;background:#e8e8e8"></div>
<div style="left:703px;top:368px;width:1px;height:194px;background:#e8e8e8"></div>
<div style="left:763px;top:368px;width:1px;height:194px;background:#e8e8e8"></div>
<div class="hc" style="left:547px;top:351px;width:40px;height:16px;">参数</div>
<div class="hc" style="left:587px;top:351px;width:58px;height:16px;">动作值</div>
<div class="hc" style="left:645px;top:351px;width:58px;height:16px;">返回值</div>
<div class="hc" style="left:703px;top:351px;width:60px;height:16px;">返回系数</div>
<div style="left:763px;top:351px;width:17px;height:211px;background:#f0f0f0"></div>
<div style="left:764px;top:368px;width:15px;height:162px;background:#cdcdcd"></div>
<svg style="left:0;top:0" width="793" height="593"><path d="M768.0 362 L771.5 358.5 L775.0 362" stroke="#606060" stroke-width="2.2" fill="none"/><path d="M768.0 551.5 L771.5 555.5 L775.0 551.5" stroke="#606060" stroke-width="2.2" fill="none"/></svg>
<div style="left:546px;top:562px;width:235px;height:1px;background:#e3e3e3"></div>
<div style="left:545px;top:563px;width:237px;height:1px;background:#fff"></div>
<div class="m" style="left:547px;top:371px;width:41px">UA</div>
<div class="m" style="left:547px;top:388px;width:41px">UB</div>
<div class="m" style="left:547px;top:405px;width:41px">UC</div>
<div class="m" style="left:547px;top:422px;width:41px">IA</div>
<div class="m" style="left:547px;top:439px;width:41px">IB</div>
<div class="m" style="left:547px;top:456px;width:41px">IC</div>
<div class="m" style="left:547px;top:473px;width:41px">Ux</div>
<svg style="left:0;top:0" width="793" height="593"><ellipse cx="163.5" cy="175.4" rx="146.3" ry="26.8" fill="none" stroke="#f0201a" stroke-width="3.6"/></svg>
<div style="left:0px;top:572px;width:793px;height:1px;background:#dcdcdc"></div>
<div style="left:0px;top:573px;width:793px;height:1px;background:#fff"></div>
<div class="ui" style="left:3px;top:578px;">就绪</div>
<div class="ui" style="left:292px;top:578px;">运行时间</div>
<div style="left:343px;top:576px;width:66px;height:17px;border-top:1px solid #a0a0a0;border-left:1px solid #a0a0a0;border-right:1px solid #fff"></div>
<div class="ui" style="left:345px;top:578px;">0.000s</div>
<div class="ui" style="left:413px;top:578px;">开关量:(红-动作，绿-返回)</div>
<div style="left:568px;top:576px;width:225px;height:17px;border-top:1px solid #a0a0a0;border-left:1px solid #a0a0a0"></div>
<div class="ui" style="left:570px;top:579px;">A</div>
<div style="left:578px;top:578px;width:11px;height:11px;border-radius:50%;background:#808080"></div>
<div class="ui" style="left:592px;top:579px;">B</div>
<div style="left:600px;top:578px;width:11px;height:11px;border-radius:50%;background:#808080"></div>
<div class="ui" style="left:614px;top:579px;">C</div>
<div style="left:622px;top:578px;width:11px;height:11px;border-radius:50%;background:#808080"></div>
<div class="ui" style="left:636px;top:579px;">R</div>
<div style="left:644px;top:578px;width:11px;height:11px;border-radius:50%;background:#808080"></div>
<div class="ui" style="left:658px;top:579px;">a</div>
<div style="left:666px;top:578px;width:11px;height:11px;border-radius:50%;background:#808080"></div>
<div class="ui" style="left:680px;top:579px;">b</div>
<div style="left:688px;top:578px;width:11px;height:11px;border-radius:50%;background:#808080"></div>
<div class="ui" style="left:702px;top:579px;">c</div>
<div style="left:710px;top:578px;width:11px;height:11px;border-radius:50%;background:#808080"></div>
<div class="ui" style="left:724px;top:579px;">r</div>
<div style="left:732px;top:578px;width:11px;height:11px;border-radius:50%;background:#808080"></div>
<div class="ui" style="left:746px;top:579px;">E</div>
<div style="left:754px;top:578px;width:11px;height:11px;border-radius:50%;background:#808080"></div>
<div class="ui" style="left:768px;top:579px;">e</div>
<div style="left:776px;top:578px;width:11px;height:11px;border-radius:50%;background:#808080"></div>
</body></html>
